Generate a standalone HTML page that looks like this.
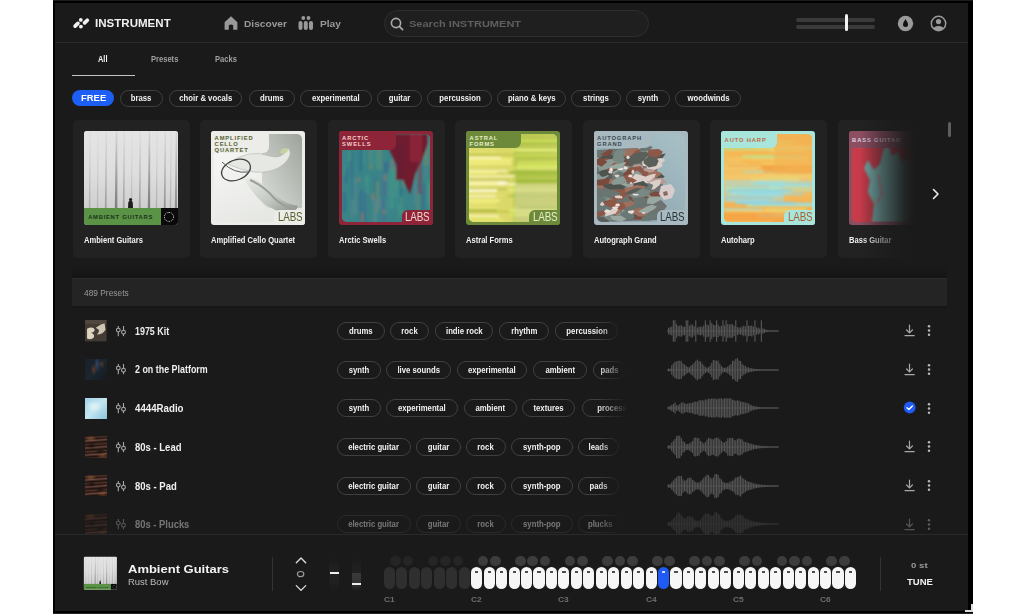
<!DOCTYPE html>
<html><head><meta charset="utf-8">
<style>
*{box-sizing:border-box;margin:0;padding:0}
html,body{width:1024px;height:614px;overflow:hidden;background:#fff}
body{position:relative;font-family:"Liberation Sans",sans-serif;color:#eee}
.a{position:absolute}
#frame{left:53px;top:0;width:920px;height:614px;background:#000;border-top:1px solid #1c1c1c;border-bottom:1px solid #262626}
#panel{left:55px;top:3px;width:913px;height:608px;background:#1a1a1a}
#hdrline{left:55px;top:42px;width:913px;height:1px;background:#2a2a2a}
.wide{font-weight:bold;white-space:nowrap}
.sx{transform-origin:0 50%;white-space:nowrap}
.t{position:absolute;white-space:nowrap;transform-origin:0 50%}
.pill{position:absolute;border:1px solid #404040;border-radius:9px;display:flex;align-items:center;justify-content:center;white-space:nowrap}
.pill span{display:inline-block;font-size:9px;font-weight:bold;color:#f2f2f2;transform:scaleX(.86)}
.card{position:absolute;top:120px;width:117px;height:138px;background:#222;border-radius:5px}
.art{position:absolute;left:11px;top:11px;width:94px;height:94px;border-radius:3px;overflow:hidden}
.lbl{font-size:5.8px;font-weight:bold;letter-spacing:.85px;white-space:nowrap}
.labs{font-size:12.3px;letter-spacing:-0.2px;font-weight:normal;line-height:12px;transform:scaleX(.8);transform-origin:0 0;white-space:nowrap}
.ctitle{position:absolute;left:11.3px;top:115px;font-size:8.9px;font-weight:bold;color:#f0f0f0;white-space:nowrap;transform:scaleX(.853);transform-origin:0 50%}
.key{position:absolute;top:566.8px;width:11.1px;height:22.4px;border-radius:5.6px}
.key i{position:absolute;left:4px;top:4.2px;width:3.2px;height:1.6px}
.bkey{position:absolute;top:555.6px;width:10.6px;height:10.6px;border-radius:50%}
</style></head><body>
<div id="frame" class="a"></div>
<div id="panel" class="a"></div>
<div id="hdrline" class="a"></div>
<!-- header -->
<svg class="a" style="left:68px;top:14px" width="26" height="18" viewBox="0 0 26 18">
  <line x1="7.1" y1="12.1" x2="9.9" y2="9.4" stroke="#f0f0f0" stroke-width="3.7" stroke-linecap="round"/>
  <line x1="16.6" y1="8.9" x2="19.3" y2="6.2" stroke="#f0f0f0" stroke-width="3.7" stroke-linecap="round"/>
  <circle cx="12.8" cy="5.9" r="1.9" fill="#f0f0f0"/>
  <circle cx="12.9" cy="12.6" r="1.9" fill="#f0f0f0"/>
</svg>
<div class="a wide sx" style="left:95px;top:17.3px;font-size:10.5px;transform:scaleX(1.1);color:#f0f0f0">INSTRUMENT</div>
<!-- home icon -->
<svg class="a" style="left:224px;top:16px" width="14" height="14" viewBox="0 0 14 14">
  <path d="M0.6 6.2 L7 0.3 L13.4 6.2 L13.4 13.8 L9.2 13.8 L9.2 9.3 Q7 7.6 4.8 9.3 L4.8 13.8 L0.6 13.8 Z" fill="#999"/>
</svg>
<div class="a wide sx" style="left:244px;top:18px;font-size:9.7px;transform:scaleX(1.05);color:#999">Discover</div>
<!-- play icon (people) -->
<svg class="a" style="left:298px;top:16px" width="16" height="14" viewBox="0 0 16 14">
  <circle cx="5.3" cy="2" r="1.9" fill="#999"/><circle cx="10.5" cy="2" r="1.9" fill="#999"/>
  <rect x="0.5" y="5" width="4" height="9" rx="2" fill="#999"/>
  <rect x="5.8" y="5" width="4" height="9" rx="2" fill="#999"/>
  <rect x="11" y="5" width="4" height="9" rx="2" fill="#999"/>
</svg>
<div class="a wide sx" style="left:320px;top:18px;font-size:9.7px;transform:scaleX(1.05);color:#999">Play</div>
<!-- search -->
<div class="a" style="left:384px;top:10px;width:265px;height:27px;border-radius:14px;background:#1f1f1f;border:1px solid #2e2e2e"></div>
<svg class="a" style="left:390px;top:17px" width="14" height="14" viewBox="0 0 14 14">
  <circle cx="6" cy="6" r="4.6" fill="none" stroke="#aaa" stroke-width="1.6"/>
  <line x1="9.4" y1="9.4" x2="12.6" y2="12.6" stroke="#aaa" stroke-width="1.7" stroke-linecap="round"/>
</svg>
<div class="a wide sx" style="left:409px;top:18.5px;font-size:9.2px;transform:scaleX(1.2);color:#5f5f5f">Search INSTRUMENT</div>
<!-- volume -->
<div class="a" style="left:796px;top:18px;width:79px;height:4px;border-radius:2px;background:#3a3a3a"></div>
<div class="a" style="left:796px;top:25px;width:79px;height:4px;border-radius:2px;background:#3a3a3a"></div>
<div class="a" style="left:845px;top:14px;width:3px;height:17px;border-radius:1.5px;background:#f4f4f4"></div>
<!-- drop icon -->
<svg class="a" style="left:897px;top:15px" width="17" height="17" viewBox="0 0 17 17">
  <circle cx="8.5" cy="8.5" r="7.7" fill="#9a9a9a"/>
  <path d="M8.5 4 C7.5 6 6 7.5 6 9.6 A2.5 2.5 0 0 0 11 9.6 C11 7.5 9.5 6 8.5 4 Z" fill="#111"/>
</svg>
<!-- profile icon -->
<svg class="a" style="left:930px;top:15px" width="17" height="17" viewBox="0 0 17 17">
  <defs><clipPath id="pc"><circle cx="8.5" cy="8.5" r="6.9"/></clipPath></defs>
  <circle cx="8.5" cy="8.5" r="7.2" fill="none" stroke="#9a9a9a" stroke-width="1.5"/>
  <circle cx="8.5" cy="6.6" r="2.6" fill="#9a9a9a"/>
  <ellipse cx="8.5" cy="15.5" rx="6" ry="4.6" fill="#9a9a9a" clip-path="url(#pc)"/>
</svg>
<!-- tabs -->
<div class="t" style="left:98.2px;top:54.2px;font-size:8.8px;font-weight:bold;color:#f2f2f2;transform:scaleX(0.84);">All</div>
<div class="a" style="left:72px;top:75px;width:62.5px;height:1.4px;background:#c4c4c4"></div>
<div class="t" style="left:150.6px;top:54.2px;font-size:8.8px;font-weight:bold;color:#a0a0a0;transform:scaleX(0.86);">Presets</div>
<div class="t" style="left:214.6px;top:54.2px;font-size:8.8px;font-weight:bold;color:#a0a0a0;transform:scaleX(0.86);">Packs</div>
<!-- tags -->
<div class="a" style="left:72.4px;top:89.8px;width:41.8px;height:16.6px;border-radius:8.3px;background:#1d5ef5"></div>
<div class="t" style="left:81px;top:93px;font-size:9px;font-weight:bold;color:#fff;transform:scaleX(1.05);">FREE</div>
<div class="pill" style="left:119.5px;top:89.6px;width:43.5px;height:17px;"><span>brass</span></div>
<div class="pill" style="left:168.7px;top:89.6px;width:73.8px;height:17px;"><span>choir &amp; vocals</span></div>
<div class="pill" style="left:248.7px;top:89.6px;width:46.5px;height:17px;"><span>drums</span></div>
<div class="pill" style="left:300.4px;top:89.6px;width:71.6px;height:17px;"><span>experimental</span></div>
<div class="pill" style="left:377.0px;top:89.6px;width:45.2px;height:17px;"><span>guitar</span></div>
<div class="pill" style="left:427.3px;top:89.6px;width:64.5px;height:17px;"><span>percussion</span></div>
<div class="pill" style="left:497.0px;top:89.6px;width:69.0px;height:17px;"><span>piano &amp; keys</span></div>
<div class="pill" style="left:571.0px;top:89.6px;width:50.0px;height:17px;"><span>strings</span></div>
<div class="pill" style="left:626.0px;top:89.6px;width:44.0px;height:17px;"><span>synth</span></div>
<div class="pill" style="left:675.0px;top:89.6px;width:66.0px;height:17px;"><span>woodwinds</span></div>
<!-- cards -->
<div class="card" style="left:72.5px"><div class="art" style="background:#d8d8d8"><svg class="a" style="left:0;top:0" width="94" height="77" viewBox="0 0 94 77">
<defs><linearGradient id="fogm" x1="0" y1="0" x2="0" y2="1"><stop offset="0" stop-color="#fff" stop-opacity=".3"/><stop offset=".5" stop-color="#fff" stop-opacity=".75"/><stop offset="1" stop-color="#fff" stop-opacity="1"/></linearGradient>
<linearGradient id="trg" gradientUnits="userSpaceOnUse" x1="0" y1="0" x2="0" y2="77"><stop offset="0" stop-color="#505050" stop-opacity=".15"/><stop offset=".45" stop-color="#505050" stop-opacity=".6"/><stop offset="1" stop-color="#484848" stop-opacity="1"/></linearGradient>
<linearGradient id="fogbg" x1="0" y1="0" x2="0" y2="1"><stop offset="0" stop-color="#e4e4e4"/><stop offset=".55" stop-color="#dedede"/><stop offset="1" stop-color="#cfcfcf"/></linearGradient>
<filter id="fb"><feGaussianBlur stdDeviation=".5"/></filter></defs>
<rect width="94" height="77" fill="url(#fogbg)"/>
<g filter="url(#fb)"><path d="M5.8 0 L6.6 0 L6.4 77 L4.8 77 Z" fill="url(#trg)" opacity="0.25"/><path d="M13.8 0 L14.5 0 L14.2 77 L12.8 77 Z" fill="url(#trg)" opacity="0.2"/><path d="M21.8 0 L22.9 0 L22.7 77 L20.8 77 Z" fill="url(#trg)" opacity="0.35"/><path d="M31.8 0 L33.3 0 L33.4 77 L30.8 77 Z" fill="url(#trg)" opacity="0.6"/><path d="M39.8 0 L40.8 0 L40.6 77 L38.8 77 Z" fill="url(#trg)" opacity="0.35"/><path d="M47.8 0 L48.5 0 L48.2 77 L46.8 77 Z" fill="url(#trg)" opacity="0.2"/><path d="M55.8 0 L56.8 0 L56.7 77 L54.8 77 Z" fill="url(#trg)" opacity="0.35"/><path d="M64.8 0 L66.2 0 L66.2 77 L63.8 77 Z" fill="url(#trg)" opacity="0.6"/><path d="M72.8 0 L73.5 0 L73.2 77 L71.8 77 Z" fill="url(#trg)" opacity="0.25"/><path d="M80.8 0 L81.8 0 L81.7 77 L79.8 77 Z" fill="url(#trg)" opacity="0.45"/><path d="M86.8 0 L87.5 0 L87.2 77 L85.8 77 Z" fill="url(#trg)" opacity="0.25"/><path d="M91.8 0 L93.1 0 L93.0 77 L90.8 77 Z" fill="url(#trg)" opacity="0.5"/></g>
<path d="M44 77 L44.3 71 Q46.5 68 48.7 71 L49 77 Z" fill="#1e1e1e"/><circle cx="46.6" cy="68.6" r="1.6" fill="#1e1e1e"/>
</svg>
<div class="a" style="left:0;top:77px;width:77px;height:17px;background:#5a9246"></div>
<div class="a lbl" style="left:4.7px;top:83px;color:#1a341b;font-size:5.8px;letter-spacing:.75px">AMBIENT GUITARS</div>
<div class="a" style="left:77px;top:77px;width:17px;height:17px;background:#0a0a0a"></div>
<div class="a" style="left:80.5px;top:80.5px;width:10px;height:10px;border-radius:50%;border:1.3px dotted #ddd"></div>
</div><div class="ctitle">Ambient Guitars</div></div>
<div class="card" style="left:200.0px"><div class="art" style="background:#ecece8">
<div class="a" style="left:3px;top:3px;width:88px;height:88px;border-radius:5px;overflow:hidden;background:linear-gradient(160deg,#f8f8f6 0%,#f0f1ee 45%,#e2e4e0 100%)"><svg class="a" style="left:0;top:0" width="88" height="88" viewBox="0 0 88 88"><defs><linearGradient id="cg2" x1="0" y1="1" x2="1" y2="0"><stop offset="0" stop-color="#dcdfda"/><stop offset="1" stop-color="#969c94"/></linearGradient>
<linearGradient id="cg3" x1="0" y1="0" x2="1" y2="1"><stop offset="0" stop-color="#f0f2ee"/><stop offset=".6" stop-color="#c4c8c2"/><stop offset="1" stop-color="#8a9088"/></linearGradient>
<filter id="cb"><feGaussianBlur stdDeviation=".5"/></filter></defs>
<rect x="48" y="-6" width="46" height="80" rx="8" fill="url(#cg2)"/>
<g filter="url(#cb)">
<path d="M14 30 Q34 14 56 22 Q68 26 74 14 Q80 20 70 30 Q58 40 40 38 Q26 36 14 30 Z" fill="#e6e8e4" stroke="#aeb2ac" stroke-width=".6"/>
<path d="M26 40 Q44 44 58 58 Q70 70 84 72 Q82 80 68 78 Q52 74 42 62 Q34 52 26 40 Z" fill="url(#cg3)"/>
<path d="M36 46 Q50 52 60 64 Q70 74 82 74" stroke="#9aa098" stroke-width="2" fill="none"/>
<ellipse cx="22" cy="36" rx="15" ry="10" fill="none" stroke="#3e423e" stroke-width="1.3" transform="rotate(-22 22 36)"/>
<ellipse cx="70" cy="17" rx="4" ry="2.5" fill="#c8d0a0" transform="rotate(-25 70 17)"/>
<path d="M8 28 Q20 40 34 38" stroke="#555a55" stroke-width="1" fill="none"/>
</g></svg></div>
<div class="a" style="left:0;top:0;width:58px;height:22px;background:#ecece8;border-bottom-right-radius:6px"></div>
<div class="a lbl" style="left:3.6px;top:3.6px;color:#55602e"><div style="height:6px;line-height:6px">AMPLIFIED</div><div style="height:6px;line-height:6px">CELLO</div><div style="height:6px;line-height:6px">QUARTET</div></div>
<div class="a" style="right:0;bottom:0;width:31px;height:15px;background:#ecece8;border-top-left-radius:6px"></div>
<div class="a labs" style="left:66.5px;top:80.3px;color:#55602e">LABS</div>
</div><div class="ctitle">Amplified Cello Quartet</div></div>
<div class="card" style="left:327.5px"><div class="art" style="background:#8e2438">
<div class="a" style="left:3px;top:3px;width:88px;height:88px;border-radius:5px;overflow:hidden;background:#3a8a94"><svg class="a" style="left:0;top:0" width="88" height="88" viewBox="0 0 88 88"><defs><filter id="ab"><feGaussianBlur stdDeviation="1"/></filter></defs>
<rect width="88" height="88" fill="#3a8488"/>
<g filter="url(#ab)"><rect x="39.8" y="64.7" width="3.5" height="22.9" fill="#4e6c94" opacity=".7"/><rect x="75.2" y="56.3" width="2.2" height="23.2" fill="#6a8a70" opacity=".7"/><rect x="69.8" y="21.2" width="1.8" height="10.9" fill="#3a8a8c" opacity=".7"/><rect x="52.4" y="31.7" width="2.9" height="31.6" fill="#42948a" opacity=".7"/><rect x="54.8" y="4.4" width="4.4" height="9.1" fill="#3c6690" opacity=".7"/><rect x="52.8" y="22.8" width="4.2" height="26.9" fill="#3c6690" opacity=".7"/><rect x="45.7" y="35.0" width="3.7" height="29.2" fill="#3e9086" opacity=".7"/><rect x="57.6" y="38.6" width="2.9" height="37.8" fill="#2e7288" opacity=".7"/><rect x="62.3" y="16.1" width="2.6" height="17.2" fill="#2e7288" opacity=".7"/><rect x="49.6" y="7.5" width="1.9" height="17.3" fill="#2e7288" opacity=".7"/><rect x="84.3" y="0.0" width="4.5" height="14.7" fill="#3a8a8c" opacity=".7"/><rect x="41.4" y="27.8" width="4.9" height="10.3" fill="#3c6690" opacity=".7"/><rect x="68.5" y="6.1" width="2.4" height="18.6" fill="#5a8890" opacity=".7"/><rect x="66.7" y="17.2" width="1.9" height="11.2" fill="#3a8a8c" opacity=".7"/><rect x="40.9" y="47.7" width="3.2" height="14.0" fill="#4e6c94" opacity=".7"/><rect x="16.8" y="9.2" width="4.1" height="28.6" fill="#2e7288" opacity=".7"/><rect x="34.7" y="0.0" width="5.0" height="35.7" fill="#6a8a70" opacity=".7"/><rect x="26.8" y="14.7" width="4.6" height="20.6" fill="#6a8a70" opacity=".7"/><rect x="56.5" y="69.3" width="1.9" height="14.8" fill="#4a9480" opacity=".7"/><rect x="0.8" y="58.1" width="3.6" height="20.4" fill="#2e7288" opacity=".7"/><rect x="7.9" y="17.0" width="3.5" height="27.2" fill="#36708a" opacity=".7"/><rect x="54.7" y="41.1" width="1.9" height="34.6" fill="#42948a" opacity=".7"/><rect x="76.3" y="10.8" width="2.1" height="37.1" fill="#6a8a70" opacity=".7"/><rect x="22.0" y="51.8" width="2.2" height="38.1" fill="#3c6690" opacity=".7"/><rect x="60.5" y="33.8" width="2.9" height="10.5" fill="#3a8a8c" opacity=".7"/><rect x="9.1" y="67.4" width="1.6" height="15.6" fill="#5a8890" opacity=".7"/><rect x="22.6" y="41.8" width="4.4" height="17.4" fill="#42948a" opacity=".7"/><rect x="81.8" y="8.8" width="4.9" height="23.3" fill="#6a8a70" opacity=".7"/><rect x="54.1" y="64.2" width="2.5" height="14.5" fill="#3a8a8c" opacity=".7"/><rect x="6.1" y="17.4" width="2.9" height="9.5" fill="#4a9480" opacity=".7"/><rect x="32.5" y="9.2" width="3.5" height="19.6" fill="#3e9086" opacity=".7"/><rect x="86.3" y="48.4" width="3.8" height="26.7" fill="#42948a" opacity=".7"/><rect x="51.9" y="33.2" width="4.7" height="19.4" fill="#4a9480" opacity=".7"/><rect x="84.7" y="44.5" width="1.6" height="23.4" fill="#4a9480" opacity=".7"/><rect x="28.1" y="5.3" width="5.0" height="25.5" fill="#3a8a8c" opacity=".7"/><rect x="79.2" y="49.3" width="4.1" height="33.4" fill="#36708a" opacity=".7"/><rect x="31.0" y="63.1" width="3.9" height="35.9" fill="#5a8890" opacity=".7"/><rect x="83.1" y="35.0" width="1.6" height="8.5" fill="#5a8890" opacity=".7"/><rect x="33.4" y="5.1" width="1.5" height="10.9" fill="#2e7288" opacity=".7"/><rect x="87.4" y="51.0" width="4.6" height="20.4" fill="#6a8a70" opacity=".7"/><rect x="40.3" y="37.9" width="3.1" height="24.6" fill="#4e6c94" opacity=".7"/><rect x="2.6" y="33.7" width="3.6" height="15.4" fill="#2e7288" opacity=".7"/><rect x="43.8" y="64.4" width="3.7" height="16.2" fill="#3a8a8c" opacity=".7"/><rect x="32.4" y="42.8" width="2.0" height="24.6" fill="#36708a" opacity=".7"/><rect x="58.1" y="62.4" width="3.0" height="18.5" fill="#4a9480" opacity=".7"/><rect x="17.5" y="56.4" width="3.0" height="37.3" fill="#3c6690" opacity=".7"/><rect x="33.8" y="22.2" width="3.5" height="12.4" fill="#3e9086" opacity=".7"/><rect x="30.9" y="2.8" width="4.6" height="10.1" fill="#4a9480" opacity=".7"/><rect x="72.3" y="33.0" width="1.9" height="37.6" fill="#5a8890" opacity=".7"/><rect x="33.7" y="47.1" width="3.3" height="30.9" fill="#6a8a70" opacity=".7"/><rect x="39.8" y="2.2" width="1.8" height="35.9" fill="#3a8a8c" opacity=".7"/><rect x="59.7" y="24.8" width="2.5" height="28.8" fill="#6a8a70" opacity=".7"/><rect x="1.7" y="31.8" width="2.0" height="8.8" fill="#4a9480" opacity=".7"/><rect x="20.9" y="3.3" width="2.0" height="28.1" fill="#3e9086" opacity=".7"/><rect x="9.6" y="44.8" width="3.4" height="19.8" fill="#2e7288" opacity=".7"/><rect x="60.2" y="33.3" width="2.2" height="13.7" fill="#3a8a8c" opacity=".7"/><rect x="66.4" y="2.5" width="3.4" height="15.2" fill="#36708a" opacity=".7"/><rect x="47.5" y="35.0" width="4.8" height="39.9" fill="#42948a" opacity=".7"/><rect x="34.6" y="63.4" width="4.3" height="10.8" fill="#5a8890" opacity=".7"/><rect x="11.4" y="43.8" width="3.1" height="37.1" fill="#5a8890" opacity=".7"/><rect x="29.8" y="59.2" width="2" height="7.0" fill="#b07a50" opacity=".6"/><rect x="41.9" y="40.6" width="2" height="6.0" fill="#b07a50" opacity=".6"/><rect x="49.2" y="25.9" width="2" height="9.2" fill="#b07a50" opacity=".6"/><rect x="40.9" y="75.5" width="2" height="4.7" fill="#b07a50" opacity=".6"/><rect x="15.9" y="43.4" width="2" height="4.5" fill="#b07a50" opacity=".6"/><rect x="18.9" y="78.6" width="2" height="9.6" fill="#b07a50" opacity=".6"/>
<path d="M44 0 L86 0 L86 10 L80 26 L74 38 L68 60 L62 48 L56 34 L50 22 L46 12 Z" fill="#701a2e"/>
<rect x="54" y="6" width="8" height="40" fill="#6a1a30"/>
<rect x="68" y="0" width="12" height="28" fill="#8a2438"/><rect x="76" y="30" width="4" height="30" fill="#8a3050" opacity=".5"/>
</g></svg></div>
<div class="a" style="left:0;top:0;width:57px;height:19px;background:#8e2438;border-bottom-right-radius:6px"></div>
<div class="a lbl" style="left:3.6px;top:3.6px;color:#f2d0ca"><div style="height:6px;line-height:6px">ARCTIC</div><div style="height:6px;line-height:6px">SWELLS</div></div>
<div class="a" style="right:0;bottom:0;width:31px;height:15px;background:#8e2438;border-top-left-radius:6px"></div>
<div class="a labs" style="left:66.5px;top:80.3px;color:#f4d4cc">LABS</div>
</div><div class="ctitle">Arctic Swells</div></div>
<div class="card" style="left:455.0px"><div class="art" style="background:#6c8a3a">
<div class="a" style="left:3px;top:3px;width:88px;height:88px;border-radius:5px;overflow:hidden;background:#dcdc74"><svg class="a" style="left:0;top:0" width="88" height="88" viewBox="0 0 88 88"><defs><filter id="sb"><feGaussianBlur stdDeviation="1"/></filter>
<linearGradient id="sg" x1="0" y1="0" x2="1" y2="0"><stop offset="0" stop-color="#e0dc70"/><stop offset=".48" stop-color="#dad868"/><stop offset=".54" stop-color="#b8c850"/><stop offset="1" stop-color="#c0cc58"/></linearGradient></defs>
<rect width="88" height="88" fill="url(#sg)"/>
<g filter="url(#sb)"><rect x="-2" y="23.0" width="33.7" height="2.6" fill="#fffae0" opacity=".85"/><rect x="-2" y="7.3" width="35.5" height="2.1" fill="#e8e870" opacity=".85"/><rect x="-2" y="24.2" width="45.2" height="3.0" fill="#f4f080" opacity=".85"/><rect x="-2" y="5.6" width="38.3" height="2.8" fill="#f4f080" opacity=".85"/><rect x="-2" y="60.4" width="28.7" height="3.0" fill="#fff6d0" opacity=".85"/><rect x="-2" y="45.5" width="42.2" height="2.6" fill="#b0b848" opacity=".85"/><rect x="-2" y="83.2" width="27.2" height="2.2" fill="#b0b848" opacity=".85"/><rect x="-2" y="19.5" width="45.8" height="2.3" fill="#c8c850" opacity=".85"/><rect x="-2" y="49.4" width="46.1" height="1.5" fill="#e8e870" opacity=".85"/><rect x="-2" y="49.3" width="48.9" height="1.8" fill="#fff6d0" opacity=".85"/><rect x="-2" y="76.6" width="46.3" height="2.4" fill="#c8c850" opacity=".85"/><rect x="-2" y="85.2" width="37.4" height="2.2" fill="#e8e870" opacity=".85"/><rect x="-2" y="36.2" width="40.1" height="1.4" fill="#fffae0" opacity=".85"/><rect x="-2" y="2.4" width="47.9" height="3.1" fill="#e8e870" opacity=".85"/><rect x="-2" y="47.9" width="37.3" height="3.2" fill="#fffae0" opacity=".85"/><rect x="-2" y="60.8" width="36.5" height="1.3" fill="#e8e870" opacity=".85"/><rect x="-2" y="81.0" width="31.7" height="2.8" fill="#fff6d0" opacity=".85"/><rect x="-2" y="41.6" width="47.5" height="1.5" fill="#fff6d0" opacity=".85"/><rect x="-2" y="82.3" width="32.9" height="3.0" fill="#e8e870" opacity=".85"/><rect x="-2" y="16.8" width="28.2" height="2.4" fill="#c8c850" opacity=".85"/><rect x="-2" y="68.6" width="28.9" height="1.2" fill="#f4f080" opacity=".85"/><rect x="-2" y="1.0" width="33.9" height="1.8" fill="#b0b848" opacity=".85"/><rect x="-2" y="54.5" width="39.6" height="1.4" fill="#b0b848" opacity=".85"/><rect x="-2" y="75.0" width="29.9" height="2.4" fill="#b0b848" opacity=".85"/><rect x="-2" y="46.7" width="40.8" height="2.1" fill="#fff6d0" opacity=".85"/><rect x="-2" y="72.6" width="30.1" height="2.4" fill="#e8e870" opacity=".85"/><rect x="-2" y="55.6" width="30.4" height="2.5" fill="#e8e870" opacity=".85"/><rect x="-2" y="47.8" width="30.8" height="2.4" fill="#f4f080" opacity=".85"/><rect x="-2" y="65.2" width="32.9" height="2.8" fill="#f4f080" opacity=".85"/><rect x="-2" y="27.7" width="44.5" height="3.0" fill="#f4f080" opacity=".85"/><rect x="-2" y="17.1" width="28.3" height="1.4" fill="#f4f080" opacity=".85"/><rect x="-2" y="7.8" width="45.8" height="2.0" fill="#fff6d0" opacity=".85"/><rect x="-2" y="37.1" width="30.0" height="2.8" fill="#f4f080" opacity=".85"/><rect x="-2" y="55.3" width="30.0" height="2.8" fill="#fffae0" opacity=".85"/><rect x="39.4" y="54.6" width="50" height="2.8" fill="#e8f080" opacity=".8"/><rect x="47.6" y="40.5" width="50" height="2.5" fill="#a8c040" opacity=".8"/><rect x="39.8" y="38.6" width="50" height="1.0" fill="#98b838" opacity=".8"/><rect x="49.9" y="14.8" width="50" height="1.4" fill="#a8c040" opacity=".8"/><rect x="39.6" y="74.2" width="50" height="1.2" fill="#d8e860" opacity=".8"/><rect x="41.9" y="54.5" width="50" height="1.2" fill="#d8e860" opacity=".8"/><rect x="40.5" y="37.4" width="50" height="2.0" fill="#98b838" opacity=".8"/><rect x="48.1" y="29.9" width="50" height="2.3" fill="#d8e860" opacity=".8"/><rect x="42.9" y="14.5" width="50" height="1.9" fill="#e8f080" opacity=".8"/><rect x="41.9" y="15.6" width="50" height="1.3" fill="#d8e860" opacity=".8"/><rect x="44.8" y="6.8" width="50" height="2.7" fill="#98b838" opacity=".8"/><rect x="47.7" y="15.3" width="50" height="2.2" fill="#e8f080" opacity=".8"/><rect x="47.8" y="20.7" width="50" height="2.8" fill="#a8c040" opacity=".8"/><rect x="47.2" y="32.5" width="50" height="2.8" fill="#e8f080" opacity=".8"/><rect x="38.8" y="61.2" width="50" height="1.8" fill="#a8c040" opacity=".8"/><rect x="48.7" y="27.3" width="50" height="1.9" fill="#d8e860" opacity=".8"/><rect x="40.8" y="79.2" width="50" height="2.8" fill="#d8e860" opacity=".8"/><rect x="40.6" y="75.6" width="50" height="2.3" fill="#e8f080" opacity=".8"/><rect x="42.7" y="32.5" width="50" height="1.4" fill="#d8e860" opacity=".8"/><rect x="47.1" y="80.0" width="50" height="2.3" fill="#d8e860" opacity=".8"/><rect x="46.9" y="78.4" width="50" height="1.0" fill="#d8e860" opacity=".8"/><rect x="47.1" y="20.5" width="50" height="1.8" fill="#d8e860" opacity=".8"/><rect x="41.0" y="51.8" width="50" height="1.0" fill="#e8f080" opacity=".8"/><rect x="49.6" y="72.5" width="50" height="2.1" fill="#98b838" opacity=".8"/><rect x="47.7" y="45.4" width="50" height="3.0" fill="#98b838" opacity=".8"/><rect x="42.6" y="6.1" width="50" height="2.2" fill="#d8e860" opacity=".8"/><rect x="46" y="50" width="42" height="38" fill="#dcd8b0" opacity=".45"/></g></svg></div>
<div class="a" style="left:0;top:0;width:55px;height:17px;background:#6c8a3a;border-bottom-right-radius:6px"></div>
<div class="a lbl" style="left:3.6px;top:3.6px;color:#e6eec8"><div style="height:6px;line-height:6px">ASTRAL</div><div style="height:6px;line-height:6px">FORMS</div></div>
<div class="a" style="right:0;bottom:0;width:31px;height:15px;background:#6c8a3a;border-top-left-radius:6px"></div>
<div class="a labs" style="left:66.5px;top:80.3px;color:#e6eec8">LABS</div>
</div><div class="ctitle">Astral Forms</div></div>
<div class="card" style="left:582.5px"><div class="art" style="background:#a8bac0">
<div class="a" style="left:3px;top:3px;width:88px;height:88px;border-radius:5px;overflow:hidden;background:#96aeb6"><svg class="a" style="left:0;top:0" width="88" height="88" viewBox="0 0 88 88"><defs><linearGradient id="ag" x1="1" y1="0" x2="0" y2="1"><stop offset="0" stop-color="#a8c0c6"/><stop offset="1" stop-color="#86a0aa"/></linearGradient>
<filter id="rb"><feGaussianBlur stdDeviation=".35"/></filter></defs>
<rect width="88" height="88" fill="url(#ag)"/>
<g filter="url(#rb)"><path d="M0 16 L40 14 L52 22 L62 30 L58 42 L66 50 L62 64 L70 72 L60 86 L0 88 Z" fill="#6e7270"/><polygon points="67.7,42.4 61.5,47.6 48.1,48.1 47.7,42.1 62.5,38.6" fill="#4e524e"/><polygon points="55.8,13.0 49.8,19.1 41.0,24.4 37.6,24.5 35.6,20.0 43.9,14.2 50.5,11.3" fill="#687470"/><polygon points="54.7,49.6 47.9,53.0 35.6,52.4 33.0,47.2 46.1,45.4" fill="#dccfca"/><polygon points="44.9,46.5 40.4,49.8 31.7,50.5 25.7,47.5 25.9,42.6 31.7,42.4 41.5,42.6" fill="#8e5848"/><polygon points="34.5,60.2 35.1,63.6 29.7,68.5 24.8,64.6 23.7,61.4 31.2,58.3" fill="#687470"/><polygon points="27.2,51.3 25.6,54.8 20.4,55.9 15.5,56.2 15.0,50.5 18.6,46.1 22.3,46.3" fill="#7a8884"/><polygon points="42.1,49.1 37.1,52.1 32.0,54.2 26.8,50.1 30.2,45.8 37.8,44.4" fill="#b49a92"/><polygon points="21.9,63.3 16.9,67.1 11.2,69.5 7.4,65.6 6.9,59.8 11.7,59.3 17.5,60.5" fill="#8a9a94"/><polygon points="51.2,57.3 47.1,60.7 38.2,63.4 31.8,59.0 31.9,57.2 37.9,54.6 48.4,55.4" fill="#8a9a94"/><polygon points="44.0,36.9 41.6,40.8 30.5,40.7 25.2,38.9 30.0,34.6 38.5,34.9" fill="#5a5e5a"/><polygon points="65.6,61.8 63.6,66.1 56.3,70.0 49.9,69.7 50.7,64.8 54.4,61.3 62.5,59.3" fill="#9aa8a2"/><polygon points="34.7,25.1 32.9,31.3 23.1,31.4 14.9,28.4 22.0,22.4 27.5,21.3" fill="#b49a92"/><polygon points="40.8,79.4 38.4,82.8 35.6,84.1 30.7,84.7 29.5,81.9 34.1,78.7 37.5,77.7" fill="#8e5848"/><polygon points="65.2,39.6 57.4,45.5 50.0,44.9 44.1,40.8 51.9,36.2 57.2,35.7" fill="#a0705e"/><polygon points="33.2,69.7 25.7,76.1 16.8,78.3 14.6,75.1 17.7,71.1 25.1,67.8" fill="#8e5848"/><polygon points="14.7,23.0 13.3,27.8 7.5,29.2 3.4,28.6 3.9,22.6 10.2,21.3" fill="#4e524e"/><polygon points="38.1,47.7 27.9,55.0 20.0,56.7 14.9,50.6 28.7,44.8" fill="#8a9a94"/><polygon points="18.0,42.9 14.1,50.7 4.9,54.4 -0.2,53.9 -2.4,48.0 6.1,43.0 11.7,43.4" fill="#a0705e"/><polygon points="17.2,42.6 15.0,44.8 10.2,46.1 6.6,44.9 6.6,43.0 9.2,39.6 13.0,40.3" fill="#5a5e5a"/><polygon points="70.6,48.8 60.1,50.8 51.7,48.8 50.2,45.1 64.9,43.8" fill="#b49a92"/><polygon points="54.5,60.9 53.1,63.7 42.0,68.3 40.1,66.3 42.7,62.1 50.8,59.8" fill="#8a9a94"/><polygon points="38.2,28.4 33.3,32.0 29.0,30.5 21.2,28.1 22.8,22.4 31.1,21.3 35.5,23.4" fill="#4e524e"/><polygon points="68.8,19.6 62.7,27.8 56.9,31.8 48.7,32.0 50.4,25.5 60.6,21.1" fill="#4e524e"/><polygon points="45.0,71.5 41.7,75.5 34.6,78.2 31.2,78.0 29.7,75.6 32.6,72.2 37.6,70.4" fill="#687470"/><polygon points="65.9,17.7 62.7,22.4 50.2,25.5 45.9,21.6 52.1,15.4 61.6,15.1" fill="#8e5848"/><polygon points="36.0,56.1 35.1,58.5 18.2,61.4 13.8,58.5 18.7,54.5 27.9,53.1" fill="#4e524e"/><polygon points="34.5,48.7 28.6,55.0 19.8,56.6 21.5,52.4 28.1,48.6" fill="#9aa8a2"/><polygon points="16.8,58.8 11.1,64.8 5.9,66.7 4.2,64.0 13.0,58.1" fill="#7a8884"/><polygon points="32.6,39.5 27.3,44.3 20.5,44.5 13.4,44.2 21.2,39.8 29.0,38.6" fill="#6a7874"/><polygon points="40.6,25.3 33.8,31.3 20.0,32.0 19.5,24.9 31.6,23.7" fill="#7a4c3e"/><polygon points="48.8,84.3 45.1,86.0 33.7,84.7 34.4,81.4 46.3,81.2" fill="#7a4c3e"/><polygon points="25.3,31.1 21.9,37.9 13.2,41.7 5.8,42.9 2.0,41.2 8.0,36.2 19.4,32.2" fill="#5a5e5a"/><polygon points="24.5,54.3 20.6,58.5 15.5,60.9 11.0,58.8 11.1,53.0 14.5,49.9 21.1,51.4" fill="#6a7874"/><polygon points="68.3,25.9 63.2,30.4 57.1,31.7 49.0,32.2 49.7,29.1 54.5,25.6 64.2,24.1" fill="#dccfca"/><polygon points="16.8,25.2 16.4,28.8 10.0,31.1 6.3,28.7 5.8,26.9 7.9,24.1 14.0,23.3" fill="#b49a92"/><polygon points="21.7,55.8 18.0,63.5 13.3,62.8 11.0,57.3 17.7,54.6" fill="#8e5848"/><polygon points="39.8,68.2 32.5,72.7 20.3,74.0 20.2,69.4 34.0,66.9" fill="#a0705e"/><polygon points="65.2,59.3 62.8,62.6 54.1,62.4 51.8,59.9 58.3,57.3" fill="#7a4c3e"/><polygon points="51.9,78.4 45.4,82.7 35.1,81.7 34.6,76.0 43.3,73.4" fill="#a0705e"/><polygon points="27.1,44.7 28.0,49.1 13.7,54.1 7.5,51.7 11.6,46.3 20.4,43.7" fill="#a0705e"/><polygon points="12.5,67.3 6.6,70.6 -5.3,69.8 -3.9,66.4 3.8,65.5" fill="#7a4c3e"/><polygon points="20.3,16.4 19.9,20.5 13.4,24.0 9.2,20.5 9.8,17.5 16.6,14.6" fill="#6a7874"/><polygon points="28.3,77.1 25.2,81.7 15.9,80.9 16.6,77.2 26.1,75.5" fill="#8a9a94"/><polygon points="52.1,62.9 46.4,67.4 36.7,68.1 31.1,63.9 34.1,60.3 46.1,60.3" fill="#7a4c3e"/><polygon points="46.4,33.6 42.9,36.8 38.5,36.6 35.1,33.4 37.3,30.8 43.1,30.1" fill="#b49a92"/><polygon points="34.2,37.7 31.1,40.8 25.5,42.9 21.9,40.6 23.6,37.7 32.0,35.9" fill="#8a9a94"/><polygon points="44.5,47.0 39.9,49.3 34.0,48.5 31.0,45.2 34.3,42.6 40.0,43.0" fill="#a0705e"/><polygon points="40.4,81.4 37.9,84.4 27.5,86.3 23.7,85.3 18.4,84.5 26.6,81.1 35.3,79.8" fill="#4e524e"/><polygon points="19.6,36.9 15.8,43.0 6.5,45.8 -0.8,41.4 4.8,35.4 15.8,33.9" fill="#5a5e5a"/><polygon points="25.1,75.3 24.9,78.3 15.0,82.2 11.4,79.6 14.3,74.7 20.5,71.3" fill="#6a7874"/><polygon points="60.0,72.4 57.5,75.0 49.5,79.6 46.1,79.6 41.1,77.5 49.7,72.5 55.1,70.8" fill="#9aa8a2"/><polygon points="47.0,41.8 44.0,47.5 29.8,50.4 28.4,43.4 40.8,39.0" fill="#6a7874"/><polygon points="12.9,45.2 11.7,49.7 4.5,51.6 -5.7,51.1 -5.2,47.1 2.9,42.5 8.6,43.3" fill="#7a4c3e"/><polygon points="60.0,32.4 56.6,37.9 49.2,38.8 45.8,35.1 52.2,32.4" fill="#b49a92"/><polygon points="17.4,70.5 16.4,74.3 6.1,76.7 -4.4,76.6 -0.3,72.3 7.1,68.8 11.9,69.2" fill="#6a7874"/><polygon points="16.7,22.4 15.0,25.2 9.1,28.0 5.4,28.6 5.1,24.6 7.8,21.2 14.1,20.5" fill="#4e524e"/><polygon points="64.3,45.6 62.6,51.0 57.3,55.3 48.2,56.4 48.5,53.6 53.0,47.9 59.0,46.0" fill="#dccfca"/><polygon points="15.9,16.6 13.9,20.7 7.9,22.5 3.8,20.5 12.7,14.9" fill="#7a4c3e"/><polygon points="8.1,29.5 3.9,33.2 -3.8,31.4 -4.2,28.8 0.1,23.5 5.4,25.8" fill="#dccfca"/><polygon points="9.1,64.9 6.6,70.9 -2.7,75.5 -5.9,74.8 -7.6,68.7 -3.9,64.1 4.5,63.0" fill="#6a7874"/><polygon points="40.7,16.4 40.9,20.3 32.0,22.9 24.0,22.2 21.9,19.5 25.3,16.1 41.2,13.8" fill="#a0705e"/><polygon points="20.3,30.0 13.6,34.5 -2.2,31.2 -0.8,25.7 11.2,24.3" fill="#8e5848"/><polygon points="19.2,35.1 15.9,37.3 4.7,40.3 1.3,39.3 8.6,34.4 15.6,32.1" fill="#4e524e"/><polygon points="65.6,30.0 64.8,32.8 57.9,35.8 50.0,34.6 49.8,32.6 55.2,29.4 60.1,28.1" fill="#dccfca"/><polygon points="46.8,36.6 41.7,39.3 28.8,37.8 31.0,34.0 43.5,32.0" fill="#8e5848"/><polygon points="51.6,38.1 49.1,43.0 41.9,47.4 37.2,45.8 38.5,41.3 45.3,36.8" fill="#8e5848"/><polygon points="25.3,75.3 22.8,79.3 17.0,81.7 9.6,80.7 10.5,77.6 15.3,74.9 21.9,72.9" fill="#a0705e"/><polygon points="59.0,39.8 57.5,43.2 52.3,47.4 46.7,47.4 45.0,44.7 47.5,43.0 54.8,40.2" fill="#dccfca"/><polygon points="36.3,39.7 31.2,42.4 24.2,43.4 17.2,36.8 25.9,34.2 33.6,35.9" fill="#7a4c3e"/><polygon points="56.3,51.1 54.1,56.5 48.8,58.1 45.0,56.2 44.3,54.2 45.9,49.0 52.5,49.3" fill="#6a7874"/><polygon points="33.7,53.8 34.5,57.0 23.8,61.2 17.0,61.1 14.6,57.2 24.1,51.4 27.9,51.7" fill="#7a8884"/><polygon points="19.1,81.3 12.1,85.3 7.7,85.3 -1.7,82.0 -2.9,78.3 5.9,76.8 15.4,78.7" fill="#8e5848"/><polygon points="36.7,78.8 37.6,83.9 27.2,86.7 19.5,83.7 26.2,77.6 33.5,75.7" fill="#6a7874"/><polygon points="33.2,32.7 29.0,37.5 21.4,42.2 15.5,42.2 16.2,37.6 28.2,32.1" fill="#8a9a94"/><polygon points="13.5,39.4 9.0,44.4 -5.1,45.6 -6.2,39.8 6.2,37.9" fill="#4e524e"/><polygon points="51.5,16.5 48.3,22.8 41.7,23.7 39.6,21.8 44.9,17.3" fill="#8a9a94"/><polygon points="20.3,33.6 16.8,36.4 13.6,36.6 8.2,35.7 8.3,32.3 11.3,31.1 17.8,32.1" fill="#8e5848"/><polygon points="29.4,61.6 24.4,66.0 13.1,64.6 8.2,59.7 15.9,55.4 25.6,56.0" fill="#8e5848"/><polygon points="49.6,64.7 48.1,70.6 38.4,70.3 34.6,64.8 45.9,62.8" fill="#687470"/><polygon points="51.6,51.8 43.3,56.0 36.5,56.0 36.4,48.5 46.4,47.0" fill="#4e524e"/><polygon points="35.9,56.2 32.4,60.8 22.7,63.2 20.8,60.2 23.9,54.7 31.3,53.9" fill="#8e5848"/><polygon points="49.1,52.3 43.4,58.8 29.4,60.0 27.7,54.9 39.5,51.0" fill="#a0705e"/><polygon points="17.1,80.9 13.6,88.0 3.4,90.8 -0.9,84.2 13.2,78.3" fill="#7a8884"/><polygon points="29.5,85.1 24.0,87.8 15.2,85.7 13.1,81.9 23.8,81.6" fill="#9aa8a2"/><polygon points="28.7,52.5 25.8,55.4 12.6,55.5 7.3,53.2 5.5,50.7 15.4,49.4 24.0,50.4" fill="#4e524e"/><polygon points="29.5,28.2 24.7,34.5 13.8,35.0 10.1,33.2 24.4,28.0" fill="#9aa8a2"/><polygon points="26.7,38.9 25.3,46.9 16.7,46.4 16.3,40.8 22.2,37.0" fill="#687470"/><polygon points="53.1,56.4 52.1,62.0 36.2,64.5 32.0,61.3 34.6,58.1 44.0,54.5" fill="#7a8884"/><polygon points="60.5,27.1 56.2,30.5 53.1,32.5 45.5,31.9 45.1,27.5 48.1,22.3 55.7,23.2" fill="#dccfca"/><polygon points="24.1,59.4 15.8,63.7 4.0,62.5 2.1,57.3 16.3,56.1" fill="#687470"/><polygon points="12.1,41.7 7.5,44.9 -3.4,46.2 -3.0,41.1 6.2,37.9" fill="#8a9a94"/><polygon points="45.1,54.0 40.6,57.3 33.9,60.2 27.2,60.1 31.5,56.9 38.8,54.1" fill="#5a5e5a"/><polygon points="45.6,20.6 43.7,24.4 40.8,26.2 35.1,23.7 36.1,19.6 37.9,16.9 41.7,15.2" fill="#8e5848"/><polygon points="19.5,26.4 10.3,35.1 2.3,37.1 -0.2,28.7 13.1,25.0" fill="#8a9a94"/><polygon points="28.0,25.1 26.2,28.4 21.6,29.9 15.4,25.9 16.9,20.8 23.2,20.5 25.6,21.4" fill="#7a8884"/><polygon points="28.7,72.2 24.4,75.9 15.7,74.6 7.8,70.4 5.9,67.9 19.5,67.7 26.8,69.2" fill="#8e5848"/><polygon points="10.4,27.7 4.6,32.7 -1.6,29.6 -2.3,25.6 3.9,23.6" fill="#7a4c3e"/><polygon points="45.3,40.3 41.5,45.3 32.4,47.2 31.6,41.7 40.4,36.6" fill="#8a9a94"/><polygon points="61.7,27.1 59.2,32.0 51.8,33.4 46.7,29.2 46.5,25.9 52.2,21.7 59.3,23.5" fill="#5a5e5a"/><polygon points="48.5,42.5 44.3,47.5 35.4,49.8 32.4,44.7 39.1,39.7" fill="#dccfca"/><polygon points="28.8,16.9 27.1,21.7 24.2,23.8 17.5,22.8 17.4,18.0 21.6,15.6 27.1,15.6" fill="#7a8884"/><polygon points="20.4,65.6 17.3,70.3 12.9,72.4 7.8,70.9 11.0,65.8 16.9,65.0" fill="#8e5848"/><polygon points="52.4,20.3 46.0,27.0 41.9,29.1 31.7,30.9 28.9,24.3 38.3,19.0 48.4,17.6" fill="#5a5e5a"/><polygon points="37.2,41.8 33.1,45.1 24.0,46.4 24.9,43.0 30.4,40.4" fill="#8e5848"/><polygon points="11.8,40.0 9.8,41.4 5.4,43.0 2.5,40.7 2.5,38.0 6.1,36.8 10.1,37.3" fill="#4e524e"/><polygon points="28.5,45.2 26.5,49.7 19.8,50.6 15.8,51.0 14.1,48.2 20.2,43.3 26.5,42.2" fill="#8a9a94"/><polygon points="39.9,46.4 35.4,49.5 29.7,48.1 29.7,44.7 35.3,43.9" fill="#8e5848"/><polygon points="12.5,87.0 7.3,89.8 -9.2,86.8 -6.6,83.3 6.0,82.8" fill="#5a5e5a"/><polygon points="21.4,75.2 18.6,79.6 8.2,82.5 8.1,79.7 17.0,73.5" fill="#dccfca"/><polygon points="60.9,79.5 60.5,83.0 53.1,86.8 44.6,86.8 44.0,84.5 49.3,80.4 57.3,78.2" fill="#6a7874"/><polygon points="23.0,71.2 21.7,72.5 18.4,72.3 18.4,71.3 18.8,69.8 22.0,69.4" fill="#f0e6e2"/><polygon points="30.8,34.1 29.7,35.3 27.8,35.5 27.1,34.7 26.4,33.3 27.7,32.1 30.0,32.9" fill="#ece0dc"/><polygon points="32.8,24.0 32.1,24.6 30.6,25.0 29.2,24.0 29.5,23.1 30.8,21.6 32.3,22.2" fill="#ece0dc"/><polygon points="7.5,70.6 5.8,72.0 2.8,70.9 3.9,68.7 5.3,67.8" fill="#e0d0cc"/><polygon points="35.3,48.7 34.4,50.4 32.9,49.5 32.9,48.4 34.5,48.1" fill="#e0d0cc"/><polygon points="25.5,63.2 24.3,64.8 23.3,64.3 22.9,63.0 24.9,62.1" fill="#f0e6e2"/><polygon points="22.9,42.1 20.7,43.3 18.9,43.4 17.3,41.6 18.4,40.7 21.2,40.6" fill="#e0d0cc"/><polygon points="25.2,63.2 21.9,64.4 18.4,64.1 17.7,61.7 22.8,61.2" fill="#e0d0cc"/><polygon points="27.0,34.8 25.5,35.9 23.7,35.9 20.6,35.7 20.7,34.6 22.5,34.4 24.9,34.1" fill="#f0e6e2"/><polygon points="16.1,38.0 14.3,39.7 11.6,39.1 11.3,37.2 13.6,36.3" fill="#e0d0cc"/><polygon points="37.4,37.7 36.7,39.8 35.5,39.8 34.5,38.4 34.6,37.0 35.6,35.8 37.0,36.1" fill="#e0d0cc"/><polygon points="48.6,78.6 47.3,79.7 45.9,79.9 44.6,78.7 45.8,78.0 47.4,78.1" fill="#e0d0cc"/><polygon points="37.4,77.6 35.2,80.0 31.5,79.1 30.9,77.1 35.9,76.3" fill="#ece0dc"/><polygon points="13.8,77.3 12.0,78.9 8.3,78.8 7.0,77.5 9.1,75.3 11.1,75.5" fill="#ece0dc"/><polygon points="36.1,41.9 34.4,43.5 31.2,43.0 31.7,40.8 33.6,40.4" fill="#ece0dc"/><polygon points="21.4,73.2 19.9,75.0 17.6,75.3 14.6,73.8 16.6,72.4 19.9,72.5" fill="#ece0dc"/><polygon points="42.2,60.5 40.7,61.4 37.2,61.5 35.4,60.4 35.8,59.7 39.9,60.0" fill="#f0e6e2"/><polygon points="16.1,36.3 14.5,37.5 12.3,36.6 12.2,34.9 14.6,33.6" fill="#f0e6e2"/>
<polygon points="64,52 74,50 78,56 75,64 67,66 62,60" fill="#d8cccc"/><polygon points="66,58 70,57 71,61 67,62" fill="#8a6a60"/>
</g></svg></div>
<div class="a" style="left:0;top:0;width:57px;height:17px;background:#a8bac0;border-bottom-right-radius:6px"></div>
<div class="a lbl" style="left:3.6px;top:3.6px;color:#3a4850"><div style="height:6px;line-height:6px">AUTOGRAPH</div><div style="height:6px;line-height:6px">GRAND</div></div>
<div class="a" style="right:0;bottom:0;width:31px;height:15px;background:#a8bac0;border-top-left-radius:6px"></div>
<div class="a labs" style="left:66.5px;top:80.3px;color:#26343a">LABS</div>
</div><div class="ctitle">Autograph Grand</div></div>
<div class="card" style="left:710.0px"><div class="art" style="background:#a8e6dc">
<div class="a" style="left:3px;top:3px;width:88px;height:88px;border-radius:5px;overflow:hidden;background:#f4b454"><svg class="a" style="left:0;top:0" width="88" height="88" viewBox="0 0 88 88"><defs><filter id="hb"><feGaussianBlur stdDeviation=".8"/></filter>
<linearGradient id="hg" x1="0" y1="0" x2="0" y2="1"><stop offset="0" stop-color="#f4b454"/><stop offset=".5" stop-color="#f2c468"/><stop offset="1" stop-color="#f6a848"/></linearGradient></defs>
<rect width="88" height="88" fill="url(#hg)"/>
<g filter="url(#hb)"><rect x="0" y="46" width="60" height="22" fill="#9cdce4" opacity=".55"/><rect x="12.3" y="4.3" width="43.2" height="1.1" fill="#b0e090" opacity=".8"/><rect x="0.8" y="13.1" width="50.0" height="2.5" fill="#b0e090" opacity=".8"/><rect x="27.6" y="44.0" width="47.9" height="2.9" fill="#e8d878" opacity=".8"/><rect x="41.9" y="42.6" width="31.3" height="1.1" fill="#e8d878" opacity=".8"/><rect x="27.2" y="16.7" width="59.8" height="2.2" fill="#f6b850" opacity=".8"/><rect x="11.0" y="67.0" width="32.7" height="2.8" fill="#90d8e8" opacity=".8"/><rect x="4.5" y="24.4" width="55.9" height="2.5" fill="#f8c860" opacity=".8"/><rect x="40.8" y="12.8" width="54.1" height="2.8" fill="#c8e080" opacity=".8"/><rect x="3.8" y="80.6" width="37.2" height="1.1" fill="#f8c860" opacity=".8"/><rect x="28.4" y="39.6" width="36.7" height="2.1" fill="#f8c860" opacity=".8"/><rect x="14.6" y="14.8" width="45.1" height="2.3" fill="#f6b850" opacity=".8"/><rect x="18.5" y="65.7" width="31.6" height="1.2" fill="#90d8e8" opacity=".8"/><rect x="46.1" y="54.1" width="46.9" height="1.5" fill="#b8e8b0" opacity=".8"/><rect x="22.5" y="69.4" width="67.6" height="3.1" fill="#b8e8b0" opacity=".8"/><rect x="45.5" y="11.6" width="34.3" height="2.0" fill="#f0d070" opacity=".8"/><rect x="7.6" y="57.5" width="60.0" height="1.7" fill="#b8e8b0" opacity=".8"/><rect x="27.7" y="69.0" width="64.6" height="2.7" fill="#a0e0e0" opacity=".8"/><rect x="48.8" y="30.1" width="59.6" height="1.6" fill="#e8d878" opacity=".8"/><rect x="30.6" y="76.2" width="53.1" height="1.9" fill="#e8d878" opacity=".8"/><rect x="49.9" y="77.5" width="63.6" height="3.2" fill="#f0d070" opacity=".8"/><rect x="5.6" y="57.7" width="49.9" height="3.4" fill="#a0e0e0" opacity=".8"/><rect x="16.1" y="7.9" width="53.2" height="2.9" fill="#f8c860" opacity=".8"/><rect x="1.5" y="18.3" width="47.9" height="3.4" fill="#f6b850" opacity=".8"/><rect x="1.2" y="75.4" width="50.2" height="3.5" fill="#f0d070" opacity=".8"/><rect x="1.9" y="53.3" width="52.3" height="2.4" fill="#b8e8b0" opacity=".8"/><rect x="31.3" y="29.9" width="55.1" height="1.0" fill="#f8c860" opacity=".8"/><rect x="28.3" y="56.4" width="32.6" height="2.2" fill="#98dce8" opacity=".8"/><rect x="0.7" y="63.0" width="48.5" height="1.6" fill="#88d0e8" opacity=".8"/><rect x="9.1" y="41.7" width="45.9" height="2.7" fill="#f0d070" opacity=".8"/><rect x="22.3" y="27.5" width="54.7" height="2.9" fill="#f6b850" opacity=".8"/><rect x="-2.5" y="80.5" width="54.0" height="2.6" fill="#f4a444" opacity=".8"/><rect x="22.7" y="60.3" width="37.8" height="2.1" fill="#a0e0e0" opacity=".8"/><rect x="12.2" y="59.3" width="67.3" height="1.9" fill="#90d8e8" opacity=".8"/><rect x="31.0" y="12.2" width="51.9" height="2.7" fill="#f0d070" opacity=".8"/><rect x="-6.6" y="75.3" width="55.9" height="1.9" fill="#f8c860" opacity=".8"/><rect x="-0.3" y="41.9" width="32.6" height="1.3" fill="#e8d878" opacity=".8"/><rect x="32.0" y="46.8" width="64.4" height="1.3" fill="#98dce8" opacity=".8"/><rect x="33.7" y="80.8" width="65.4" height="1.9" fill="#a8dcc8" opacity=".8"/><rect x="30.6" y="48.8" width="69.0" height="2.5" fill="#90d8e8" opacity=".8"/><rect x="18.1" y="25.3" width="30.4" height="2.9" fill="#f6b850" opacity=".8"/><rect x="44.6" y="41.9" width="36.3" height="1.7" fill="#e8d878" opacity=".8"/><rect x="26.4" y="23.4" width="57.3" height="2.3" fill="#f0d070" opacity=".8"/><rect x="-5.6" y="87.2" width="54.3" height="3.0" fill="#f0d070" opacity=".8"/><rect x="19.0" y="37.0" width="45.9" height="1.7" fill="#a8dcc8" opacity=".8"/><rect x="-7.2" y="42.2" width="46.0" height="1.9" fill="#f8c860" opacity=".8"/><rect x="16.6" y="7.0" width="52.8" height="2.7" fill="#c8e080" opacity=".8"/><rect x="16.7" y="8.6" width="41.8" height="1.6" fill="#c8e080" opacity=".8"/><rect x="33.7" y="32.4" width="30.1" height="3.2" fill="#f4a444" opacity=".8"/><rect x="-1.8" y="14.9" width="65.6" height="1.4" fill="#c8e080" opacity=".8"/><rect x="2.8" y="65.9" width="47.8" height="1.2" fill="#a0e0e0" opacity=".8"/><rect x="10.1" y="53.2" width="35.8" height="1.1" fill="#90d8e8" opacity=".8"/><rect x="48.5" y="68.7" width="43.3" height="1.3" fill="#90d8e8" opacity=".8"/><rect x="39.7" y="35.3" width="66.4" height="3.3" fill="#f4a444" opacity=".8"/><rect x="45.0" y="15.7" width="38.3" height="2.2" fill="#f0d070" opacity=".8"/><rect x="46.9" y="56.6" width="54.7" height="1.2" fill="#a0e0e0" opacity=".8"/><rect x="39.0" y="28.2" width="39.5" height="2.8" fill="#f8c860" opacity=".8"/><rect x="41.9" y="74.3" width="40.0" height="2.3" fill="#e8d878" opacity=".8"/><rect x="25.7" y="48.6" width="40.5" height="1.8" fill="#a0e0e0" opacity=".8"/><rect x="17.8" y="21.3" width="34.7" height="2.7" fill="#c8e080" opacity=".8"/><rect x="19.8" y="8.4" width="55.8" height="1.4" fill="#f6b850" opacity=".8"/><rect x="3.5" y="32.1" width="54.3" height="1.9" fill="#f4a444" opacity=".8"/><rect x="25.9" y="21.8" width="54.5" height="1.2" fill="#b0e090" opacity=".8"/><rect x="14.4" y="67.8" width="55.9" height="2.5" fill="#88d0e8" opacity=".8"/><rect x="-2.6" y="32.9" width="40.0" height="2.0" fill="#f0d070" opacity=".8"/><rect x="38.0" y="41.0" width="57.0" height="2.4" fill="#f0d070" opacity=".8"/><rect x="-7.3" y="74.2" width="45.4" height="2.0" fill="#a8dcc8" opacity=".8"/><rect x="45.3" y="50.1" width="42.1" height="3.4" fill="#a0e0e0" opacity=".8"/><rect x="48.8" y="33.3" width="51.2" height="1.3" fill="#f4a444" opacity=".8"/><rect x="3.6" y="55.4" width="65.1" height="2.3" fill="#88d0e8" opacity=".8"/><rect x="38.0" y="31.0" width="67.3" height="2.2" fill="#f4a444" opacity=".8"/><rect x="50" y="0" width="38" height="40" fill="#f4b050" opacity=".5"/><rect x="0" y="78" width="88" height="10" fill="#f6a444" opacity=".6"/></g></svg></div>
<div class="a" style="left:0;top:0;width:56px;height:17px;background:#a8e6dc;border-bottom-right-radius:6px"></div>
<div class="a lbl" style="left:3.6px;top:5.6px;color:#c06a44"><div style="height:6px;line-height:6px">AUTO HARP</div></div>
<div class="a" style="right:0;bottom:0;width:31px;height:15px;background:#a8e6dc;border-top-left-radius:6px"></div>
<div class="a labs" style="left:66.5px;top:80.3px;color:#a85e34">LABS</div>
</div><div class="ctitle">Autoharp</div></div>
<div class="card" style="left:837.5px"><div class="art" style="background:#8e4e62">
<div class="a" style="left:3px;top:3px;width:88px;height:88px;border-radius:5px;overflow:hidden;background:#c04050"><svg class="a" style="left:0;top:0" width="88" height="88" viewBox="0 0 88 88"><defs><filter id="bb"><feGaussianBlur stdDeviation="1"/></filter>
<linearGradient id="bg" x1="0" y1="0" x2="1" y2="0"><stop offset="0" stop-color="#c83c4a"/><stop offset=".5" stop-color="#b83646"/><stop offset="1" stop-color="#c45464"/></linearGradient></defs>
<rect width="88" height="88" fill="url(#bg)"/>
<g filter="url(#bb)"><path d="M12 34 L16 26 L22 36 L28 30 L32 14 L36 10 L40 22 L46 18 L50 28 L56 24 L60 40 L58 56 L62 72 L56 88 L20 88 L22 70 L16 58 L18 46 Z" fill="#70a6a4"/>
<path d="M26 40 L30 60 L24 70" stroke="#c05060" stroke-width="2" fill="none" opacity=".6"/>
<rect x="4" y="10" width="10" height="3" fill="#e8c8d0" opacity=".5"/><rect x="62" y="70" width="14" height="3" fill="#e8d0d8" opacity=".4"/></g></svg></div>
<div class="a" style="left:0;top:0;width:70px;height:17px;background:#8e4e62;border-bottom-right-radius:6px"></div>
<div class="a lbl" style="left:3.6px;top:5.6px;color:#dcd6e2"><div style="height:6px;line-height:6px">BASS GUITAR</div></div>
<div class="a" style="right:0;bottom:0;width:31px;height:15px;background:#8e4e62;border-top-left-radius:6px"></div>
<div class="a labs" style="left:66.5px;top:80.3px;color:#dcd6e2">LABS</div>
</div><div class="ctitle">Bass Guitar</div></div>
<div class="a" style="left:860px;top:115px;width:108px;height:150px;background:linear-gradient(90deg,rgba(26,26,26,0) 0,rgba(26,26,26,.5) 22px,rgba(26,26,26,.92) 45px,#1a1a1a 55px)"></div>
<div class="a" style="left:948px;top:122px;width:3.2px;height:14.5px;border-radius:1.6px;background:#5e5e5e"></div>
<svg class="a" style="left:931px;top:188px" width="10" height="12" viewBox="0 0 10 12"><polyline points="2.5,1.5 7,6 2.5,10.5" fill="none" stroke="#eee" stroke-width="1.6" stroke-linecap="round" stroke-linejoin="round"/></svg>
<!-- list -->
<div class="a" style="left:72px;top:266px;width:875px;height:12px;background:linear-gradient(180deg,rgba(20,20,20,0),rgba(20,20,20,.9))"></div>
<div class="a" style="left:72px;top:305.5px;width:875px;height:2px;background:#171717"></div>
<div class="a" style="left:72px;top:278px;width:875px;height:27.5px;background:#242424;border-top:1px solid #2d2d2d"></div>
<div class="t" style="left:83.5px;top:288px;font-size:9px;color:#9a9a9a;transform:scaleX(.93)">489 Presets</div>
<div class="a" style="left:0;top:320.2px;width:1024px;height:24px;">
<svg class="a" style="left:85.2px;top:0" width="21.6" height="21.4" viewBox="0 0 22 22"><defs><filter id="kb"><feGaussianBlur stdDeviation=".6"/></filter></defs><rect width="22" height="22" fill="#443c34"/><g filter="url(#kb)"><path d="M2 9 Q8 6 10 10 Q9 13 6 13 Q10 14 9 18 Q6 21 2 19 Z" fill="#ddd4c0"/><path d="M11 8 Q16 4 20 3 L21 10 Q18 15 12 15 Q15 12 14 10 Z" fill="#cfc6b2"/><rect x="0" y="0" width="22" height="4" fill="#5a5046" opacity=".6"/></g></svg>
<svg class="a" style="left:114px;top:4.5px" width="14" height="13" viewBox="0 0 14 13"><g stroke="#a8a8a8" stroke-width="1.1" fill="none"><line x1="4.3" y1="1" x2="4.3" y2="11.2"/><line x1="9.5" y1="1" x2="9.5" y2="11.2"/></g><circle cx="4.3" cy="5.1" r="1.9" fill="#1a1a1a" stroke="#a8a8a8" stroke-width="1.1"/><circle cx="9.5" cy="7.2" r="1.9" fill="#1a1a1a" stroke="#a8a8a8" stroke-width="1.1"/></svg>
<div class="t" style="left:134.7px;top:5.6px;font-size:10px;font-weight:bold;color:#efefef;transform:scaleX(0.89)">1975 Kit</div>
<div class="a" style="left:330px;top:0;width:300px;height:22px;-webkit-mask-image:linear-gradient(90deg,#000 266px,rgba(0,0,0,.5) 282px,rgba(0,0,0,0) 297px)"><div class="pill" style="left:7.0px;top:1.7px;width:47.7px;height:18px;border-radius:9px"><span>drums</span></div><div class="pill" style="left:60.0px;top:1.7px;width:39.4px;height:18px;border-radius:9px"><span>rock</span></div><div class="pill" style="left:105.3px;top:1.7px;width:58.1px;height:18px;border-radius:9px"><span>indie rock</span></div><div class="pill" style="left:169.0px;top:1.7px;width:49.8px;height:18px;border-radius:9px"><span>rhythm</span></div><div class="pill" style="left:225.0px;top:1.7px;width:63.1px;height:18px;border-radius:9px"><span>percussion</span></div></div>
<div class="a" style="left:666.5px;top:-1.3px"><svg width="112" height="24" viewBox="0 0 112 24"><g fill="#565656"><rect x="1.0" y="8.74" width="1.15" height="6.52"/><rect x="2.6" y="8.20" width="1.15" height="7.60"/><rect x="4.2" y="7.50" width="1.15" height="9.00"/><rect x="5.8" y="1.30" width="1.15" height="21.40"/><rect x="7.4" y="1.30" width="1.15" height="21.40"/><rect x="9.0" y="5.13" width="1.15" height="13.74"/><rect x="10.6" y="7.09" width="1.15" height="9.83"/><rect x="12.2" y="6.47" width="1.15" height="11.06"/><rect x="13.8" y="6.23" width="1.15" height="11.54"/><rect x="15.4" y="7.55" width="1.15" height="8.91"/><rect x="17.0" y="7.85" width="1.15" height="8.30"/><rect x="18.6" y="1.30" width="1.15" height="21.40"/><rect x="20.2" y="1.30" width="1.15" height="21.40"/><rect x="21.8" y="6.84" width="1.15" height="10.32"/><rect x="23.4" y="5.61" width="1.15" height="12.78"/><rect x="25.0" y="5.63" width="1.15" height="12.74"/><rect x="26.6" y="7.52" width="1.15" height="8.96"/><rect x="28.2" y="1.30" width="1.15" height="21.40"/><rect x="29.8" y="8.61" width="1.15" height="6.79"/><rect x="31.4" y="7.79" width="1.15" height="8.42"/><rect x="33.0" y="7.56" width="1.15" height="8.87"/><rect x="34.6" y="8.07" width="1.15" height="7.87"/><rect x="36.2" y="6.36" width="1.15" height="11.27"/><rect x="37.8" y="1.30" width="1.15" height="21.40"/><rect x="39.4" y="5.54" width="1.15" height="12.91"/><rect x="41.0" y="6.31" width="1.15" height="11.37"/><rect x="42.6" y="1.30" width="1.15" height="21.40"/><rect x="44.2" y="4.04" width="1.15" height="15.93"/><rect x="45.8" y="5.90" width="1.15" height="12.19"/><rect x="47.4" y="6.18" width="1.15" height="11.64"/><rect x="49.0" y="1.30" width="1.15" height="21.40"/><rect x="50.6" y="5.73" width="1.15" height="12.54"/><rect x="52.2" y="7.47" width="1.15" height="9.06"/><rect x="53.8" y="6.80" width="1.15" height="10.40"/><rect x="55.4" y="1.30" width="1.15" height="21.40"/><rect x="57.0" y="6.35" width="1.15" height="11.31"/><rect x="58.6" y="1.30" width="1.15" height="21.40"/><rect x="60.2" y="5.10" width="1.15" height="13.79"/><rect x="61.8" y="5.56" width="1.15" height="12.89"/><rect x="63.4" y="5.00" width="1.15" height="14.00"/><rect x="65.0" y="5.41" width="1.15" height="13.18"/><rect x="66.6" y="7.02" width="1.15" height="9.97"/><rect x="68.2" y="1.30" width="1.15" height="21.40"/><rect x="69.8" y="8.04" width="1.15" height="7.93"/><rect x="71.4" y="8.44" width="1.15" height="7.12"/><rect x="73.0" y="8.55" width="1.15" height="6.90"/><rect x="74.6" y="7.72" width="1.15" height="8.55"/><rect x="76.2" y="6.70" width="1.15" height="10.60"/><rect x="77.8" y="7.55" width="1.15" height="8.89"/><rect x="79.4" y="1.30" width="1.15" height="21.40"/><rect x="81.0" y="6.70" width="1.15" height="10.59"/><rect x="82.6" y="6.99" width="1.15" height="10.02"/><rect x="84.2" y="6.41" width="1.15" height="11.18"/><rect x="85.8" y="7.54" width="1.15" height="8.93"/><rect x="87.4" y="1.30" width="1.15" height="21.40"/><rect x="89.0" y="8.43" width="1.15" height="7.14"/><rect x="90.6" y="8.47" width="1.15" height="7.06"/><rect x="92.2" y="9.45" width="1.15" height="5.09"/><rect x="93.8" y="1.30" width="1.15" height="21.40"/><rect x="95.4" y="9.22" width="1.15" height="5.57"/><rect x="97.0" y="10.16" width="1.15" height="3.68"/><rect x="98.6" y="10.77" width="1.15" height="2.45"/><rect x="100.2" y="11.18" width="1.15" height="1.64"/><rect x="101.8" y="11.40" width="1.15" height="1.20"/><rect x="103.4" y="11.40" width="1.15" height="1.20"/><rect x="105.0" y="11.40" width="1.15" height="1.20"/><rect x="106.6" y="11.40" width="1.15" height="1.20"/><rect x="108.2" y="11.40" width="1.15" height="1.20"/><rect x="109.8" y="11.40" width="1.15" height="1.20"/><rect x="0" y="11.55" width="112" height=".9"/></g></svg></div>
<svg class="a" style="left:903px;top:4px" width="13" height="13" viewBox="0 0 13 13"><g stroke="#a8a8a8" stroke-width="1.2" fill="none" stroke-linecap="round"><line x1="6.5" y1="1" x2="6.5" y2="8.6"/><polyline points="3.6,6 6.5,8.9 9.4,6" stroke-linejoin="round"/><line x1="2" y1="11.6" x2="11.2" y2="11.6"/></g></svg>
<svg class="a" style="left:926px;top:4px" width="6" height="14" viewBox="0 0 6 14"><g fill="#b8b8b8"><circle cx="3" cy="2.3" r="1.25"/><circle cx="3" cy="6.5" r="1.25"/><circle cx="3" cy="10.8" r="1.25"/></g></svg>
</div>
<div class="a" style="left:0;top:358.9px;width:1024px;height:24px;">
<div class="a" style="left:85.2px;top:0;width:21.6px;height:21.4px;background:radial-gradient(ellipse 3px 6px at 40% 50%,rgba(110,60,40,.8),rgba(0,0,0,0)),radial-gradient(ellipse 3px 8px at 55% 25%,rgba(50,80,120,.8),rgba(0,0,0,0)),radial-gradient(ellipse 3px 4px at 75% 25%,rgba(110,60,30,.7),rgba(0,0,0,0)),linear-gradient(135deg,#182028,#1c2630 50%,#141a20)"></div>
<svg class="a" style="left:114px;top:4.5px" width="14" height="13" viewBox="0 0 14 13"><g stroke="#a8a8a8" stroke-width="1.1" fill="none"><line x1="4.3" y1="1" x2="4.3" y2="11.2"/><line x1="9.5" y1="1" x2="9.5" y2="11.2"/></g><circle cx="4.3" cy="5.1" r="1.9" fill="#1a1a1a" stroke="#a8a8a8" stroke-width="1.1"/><circle cx="9.5" cy="7.2" r="1.9" fill="#1a1a1a" stroke="#a8a8a8" stroke-width="1.1"/></svg>
<div class="t" style="left:134.7px;top:5.6px;font-size:10px;font-weight:bold;color:#efefef;transform:scaleX(0.89)">2 on the Platform</div>
<div class="a" style="left:330px;top:0;width:300px;height:22px;-webkit-mask-image:linear-gradient(90deg,#000 266px,rgba(0,0,0,.5) 282px,rgba(0,0,0,0) 297px)"><div class="pill" style="left:6.9px;top:1.7px;width:43.7px;height:18px;border-radius:9px"><span>synth</span></div><div class="pill" style="left:56.3px;top:1.7px;width:64.7px;height:18px;border-radius:9px"><span>live sounds</span></div><div class="pill" style="left:126.6px;top:1.7px;width:70.9px;height:18px;border-radius:9px"><span>experimental</span></div><div class="pill" style="left:203.0px;top:1.7px;width:53.9px;height:18px;border-radius:9px"><span>ambient</span></div><div class="pill" style="left:262.5px;top:1.7px;width:33.5px;height:18px;border-radius:9px"><span>pads</span></div></div>
<div class="a" style="left:666.5px;top:-1.3px"><svg width="112" height="24" viewBox="0 0 112 24"><g fill="#565656"><rect x="1.0" y="10.51" width="1.15" height="2.98"/><rect x="2.6" y="10.72" width="1.15" height="2.57"/><rect x="4.2" y="7.22" width="1.15" height="9.57"/><rect x="5.8" y="5.40" width="1.15" height="13.20"/><rect x="7.4" y="3.68" width="1.15" height="16.64"/><rect x="9.0" y="3.36" width="1.15" height="17.28"/><rect x="10.6" y="2.75" width="1.15" height="18.51"/><rect x="12.2" y="2.64" width="1.15" height="18.73"/><rect x="13.8" y="3.20" width="1.15" height="17.60"/><rect x="15.4" y="5.65" width="1.15" height="12.70"/><rect x="17.0" y="6.45" width="1.15" height="11.11"/><rect x="18.6" y="7.89" width="1.15" height="8.23"/><rect x="20.2" y="8.98" width="1.15" height="6.04"/><rect x="21.8" y="9.25" width="1.15" height="5.51"/><rect x="23.4" y="7.34" width="1.15" height="9.33"/><rect x="25.0" y="6.58" width="1.15" height="10.84"/><rect x="26.6" y="4.64" width="1.15" height="14.71"/><rect x="28.2" y="2.85" width="1.15" height="18.29"/><rect x="29.8" y="1.66" width="1.15" height="20.67"/><rect x="31.4" y="3.11" width="1.15" height="17.79"/><rect x="33.0" y="3.35" width="1.15" height="17.31"/><rect x="34.6" y="5.62" width="1.15" height="12.77"/><rect x="36.2" y="7.51" width="1.15" height="8.98"/><rect x="37.8" y="8.81" width="1.15" height="6.37"/><rect x="39.4" y="9.77" width="1.15" height="4.45"/><rect x="41.0" y="9.10" width="1.15" height="5.80"/><rect x="42.6" y="7.50" width="1.15" height="9.00"/><rect x="44.2" y="4.73" width="1.15" height="14.55"/><rect x="45.8" y="1.98" width="1.15" height="20.03"/><rect x="47.4" y="2.34" width="1.15" height="19.33"/><rect x="49.0" y="2.74" width="1.15" height="18.52"/><rect x="50.6" y="2.53" width="1.15" height="18.95"/><rect x="52.2" y="5.51" width="1.15" height="12.97"/><rect x="53.8" y="7.72" width="1.15" height="8.55"/><rect x="55.4" y="9.29" width="1.15" height="5.41"/><rect x="57.0" y="9.97" width="1.15" height="4.05"/><rect x="58.6" y="9.37" width="1.15" height="5.25"/><rect x="60.2" y="8.60" width="1.15" height="6.79"/><rect x="61.8" y="7.23" width="1.15" height="9.53"/><rect x="63.4" y="5.94" width="1.15" height="12.12"/><rect x="65.0" y="2.71" width="1.15" height="18.59"/><rect x="66.6" y="2.68" width="1.15" height="18.63"/><rect x="68.2" y="0.77" width="1.15" height="22.46"/><rect x="69.8" y="0.00" width="1.15" height="24.00"/><rect x="71.4" y="2.49" width="1.15" height="19.03"/><rect x="73.0" y="3.02" width="1.15" height="17.96"/><rect x="74.6" y="5.87" width="1.15" height="12.27"/><rect x="76.2" y="7.27" width="1.15" height="9.46"/><rect x="77.8" y="8.01" width="1.15" height="7.98"/><rect x="79.4" y="9.15" width="1.15" height="5.70"/><rect x="81.0" y="9.50" width="1.15" height="5.00"/><rect x="82.6" y="10.07" width="1.15" height="3.86"/><rect x="84.2" y="10.19" width="1.15" height="3.62"/><rect x="85.8" y="10.67" width="1.15" height="2.67"/><rect x="87.4" y="10.87" width="1.15" height="2.25"/><rect x="89.0" y="10.98" width="1.15" height="2.05"/><rect x="90.6" y="11.18" width="1.15" height="1.63"/><rect x="92.2" y="11.32" width="1.15" height="1.37"/><rect x="93.8" y="11.46" width="1.15" height="1.08"/><rect x="95.4" y="11.46" width="1.15" height="1.09"/><rect x="97.0" y="11.43" width="1.15" height="1.14"/><rect x="98.6" y="11.46" width="1.15" height="1.09"/><rect x="100.2" y="11.48" width="1.15" height="1.05"/><rect x="101.8" y="11.46" width="1.15" height="1.07"/><rect x="103.4" y="11.49" width="1.15" height="1.02"/><rect x="105.0" y="11.47" width="1.15" height="1.07"/><rect x="106.6" y="11.40" width="1.15" height="1.20"/><rect x="108.2" y="11.40" width="1.15" height="1.19"/><rect x="109.8" y="11.44" width="1.15" height="1.12"/><rect x="0" y="11.55" width="112" height=".9"/></g></svg></div>
<svg class="a" style="left:903px;top:4px" width="13" height="13" viewBox="0 0 13 13"><g stroke="#a8a8a8" stroke-width="1.2" fill="none" stroke-linecap="round"><line x1="6.5" y1="1" x2="6.5" y2="8.6"/><polyline points="3.6,6 6.5,8.9 9.4,6" stroke-linejoin="round"/><line x1="2" y1="11.6" x2="11.2" y2="11.6"/></g></svg>
<svg class="a" style="left:926px;top:4px" width="6" height="14" viewBox="0 0 6 14"><g fill="#b8b8b8"><circle cx="3" cy="2.3" r="1.25"/><circle cx="3" cy="6.5" r="1.25"/><circle cx="3" cy="10.8" r="1.25"/></g></svg>
</div>
<div class="a" style="left:0;top:397.6px;width:1024px;height:24px;">
<div class="a" style="left:85.2px;top:0;width:21.6px;height:21.4px;background:radial-gradient(ellipse 8px 6px at 40% 40%,#e4f4f8,rgba(0,0,0,0)),linear-gradient(135deg,#a0d4e8,#c4e6f0 50%,#88c4dc)"></div>
<svg class="a" style="left:114px;top:4.5px" width="14" height="13" viewBox="0 0 14 13"><g stroke="#a8a8a8" stroke-width="1.1" fill="none"><line x1="4.3" y1="1" x2="4.3" y2="11.2"/><line x1="9.5" y1="1" x2="9.5" y2="11.2"/></g><circle cx="4.3" cy="5.1" r="1.9" fill="#1a1a1a" stroke="#a8a8a8" stroke-width="1.1"/><circle cx="9.5" cy="7.2" r="1.9" fill="#1a1a1a" stroke="#a8a8a8" stroke-width="1.1"/></svg>
<div class="t" style="left:134.7px;top:5.6px;font-size:10px;font-weight:bold;color:#efefef;transform:scaleX(0.97)">4444Radio</div>
<div class="a" style="left:330px;top:0;width:300px;height:22px;-webkit-mask-image:linear-gradient(90deg,#000 266px,rgba(0,0,0,.5) 282px,rgba(0,0,0,0) 297px)"><div class="pill" style="left:6.9px;top:1.7px;width:43.7px;height:18px;border-radius:9px"><span>synth</span></div><div class="pill" style="left:56.3px;top:1.7px;width:71.8px;height:18px;border-radius:9px"><span>experimental</span></div><div class="pill" style="left:133.8px;top:1.7px;width:53.1px;height:18px;border-radius:9px"><span>ambient</span></div><div class="pill" style="left:192.2px;top:1.7px;width:53.1px;height:18px;border-radius:9px"><span>textures</span></div><div class="pill" style="left:251.6px;top:1.7px;width:69.4px;height:18px;border-radius:9px"><span>processed</span></div></div>
<div class="a" style="left:666.5px;top:-1.3px"><svg width="112" height="24" viewBox="0 0 112 24"><g fill="#565656"><rect x="1.0" y="10.82" width="1.15" height="2.37"/><rect x="2.6" y="9.87" width="1.15" height="4.26"/><rect x="4.2" y="9.04" width="1.15" height="5.92"/><rect x="5.8" y="7.95" width="1.15" height="8.10"/><rect x="7.4" y="6.45" width="1.15" height="11.11"/><rect x="9.0" y="9.23" width="1.15" height="5.54"/><rect x="10.6" y="9.30" width="1.15" height="5.40"/><rect x="12.2" y="8.08" width="1.15" height="7.83"/><rect x="13.8" y="6.64" width="1.15" height="10.72"/><rect x="15.4" y="6.37" width="1.15" height="11.25"/><rect x="17.0" y="7.37" width="1.15" height="9.25"/><rect x="18.6" y="7.73" width="1.15" height="8.53"/><rect x="20.2" y="7.74" width="1.15" height="8.52"/><rect x="21.8" y="7.09" width="1.15" height="9.82"/><rect x="23.4" y="7.15" width="1.15" height="9.71"/><rect x="25.0" y="6.57" width="1.15" height="10.86"/><rect x="26.6" y="5.86" width="1.15" height="12.27"/><rect x="28.2" y="5.55" width="1.15" height="12.90"/><rect x="29.8" y="5.66" width="1.15" height="12.68"/><rect x="31.4" y="4.38" width="1.15" height="15.25"/><rect x="33.0" y="4.38" width="1.15" height="15.23"/><rect x="34.6" y="4.10" width="1.15" height="15.80"/><rect x="36.2" y="4.64" width="1.15" height="14.71"/><rect x="37.8" y="3.43" width="1.15" height="17.13"/><rect x="39.4" y="3.62" width="1.15" height="16.75"/><rect x="41.0" y="2.59" width="1.15" height="18.82"/><rect x="42.6" y="2.97" width="1.15" height="18.07"/><rect x="44.2" y="2.33" width="1.15" height="19.34"/><rect x="45.8" y="2.63" width="1.15" height="18.73"/><rect x="47.4" y="2.36" width="1.15" height="19.27"/><rect x="49.0" y="3.17" width="1.15" height="17.65"/><rect x="50.6" y="2.64" width="1.15" height="18.72"/><rect x="52.2" y="2.47" width="1.15" height="19.06"/><rect x="53.8" y="2.31" width="1.15" height="19.38"/><rect x="55.4" y="3.17" width="1.15" height="17.66"/><rect x="57.0" y="2.28" width="1.15" height="19.43"/><rect x="58.6" y="2.23" width="1.15" height="19.53"/><rect x="60.2" y="2.56" width="1.15" height="18.88"/><rect x="61.8" y="2.20" width="1.15" height="19.61"/><rect x="63.4" y="2.57" width="1.15" height="18.87"/><rect x="65.0" y="3.65" width="1.15" height="16.70"/><rect x="66.6" y="3.99" width="1.15" height="16.02"/><rect x="68.2" y="4.91" width="1.15" height="14.17"/><rect x="69.8" y="4.32" width="1.15" height="15.36"/><rect x="71.4" y="4.60" width="1.15" height="14.80"/><rect x="73.0" y="5.61" width="1.15" height="12.77"/><rect x="74.6" y="5.75" width="1.15" height="12.50"/><rect x="76.2" y="6.12" width="1.15" height="11.76"/><rect x="77.8" y="6.50" width="1.15" height="10.99"/><rect x="79.4" y="7.03" width="1.15" height="9.95"/><rect x="81.0" y="7.53" width="1.15" height="8.93"/><rect x="82.6" y="8.58" width="1.15" height="6.84"/><rect x="84.2" y="9.23" width="1.15" height="5.53"/><rect x="85.8" y="9.90" width="1.15" height="4.20"/><rect x="87.4" y="10.26" width="1.15" height="3.48"/><rect x="89.0" y="10.58" width="1.15" height="2.85"/><rect x="90.6" y="10.90" width="1.15" height="2.21"/><rect x="92.2" y="11.11" width="1.15" height="1.78"/><rect x="93.8" y="11.38" width="1.15" height="1.23"/><rect x="95.4" y="11.49" width="1.15" height="1.02"/><rect x="97.0" y="11.46" width="1.15" height="1.08"/><rect x="98.6" y="11.44" width="1.15" height="1.12"/><rect x="100.2" y="11.48" width="1.15" height="1.03"/><rect x="101.8" y="11.43" width="1.15" height="1.13"/><rect x="103.4" y="11.44" width="1.15" height="1.12"/><rect x="105.0" y="11.50" width="1.15" height="0.99"/><rect x="106.6" y="11.46" width="1.15" height="1.09"/><rect x="108.2" y="11.48" width="1.15" height="1.03"/><rect x="109.8" y="11.50" width="1.15" height="1.00"/><rect x="0" y="11.55" width="112" height=".9"/></g></svg></div>
<svg class="a" style="left:903px;top:3.3px" width="13" height="13" viewBox="0 0 13 13"><circle cx="6.7" cy="6.5" r="5.9" fill="#1f5af5"/><polyline points="4,6.8 5.9,8.5 9.4,4.9" fill="none" stroke="#fff" stroke-width="1.4" stroke-linecap="round" stroke-linejoin="round"/></svg>
<svg class="a" style="left:926px;top:4px" width="6" height="14" viewBox="0 0 6 14"><g fill="#b8b8b8"><circle cx="3" cy="2.3" r="1.25"/><circle cx="3" cy="6.5" r="1.25"/><circle cx="3" cy="10.8" r="1.25"/></g></svg>
</div>
<div class="a" style="left:0;top:436.3px;width:1024px;height:24px;">
<div class="a" style="left:85.2px;top:0;width:21.6px;height:21.4px;background:radial-gradient(ellipse 6px 3px at 25% 12%,rgba(170,110,60,.55),rgba(0,0,0,0)),radial-gradient(ellipse 6px 3px at 80% 88%,rgba(170,100,50,.5),rgba(0,0,0,0)),radial-gradient(ellipse 5px 3px at 30% 45%,rgba(20,14,12,.9),rgba(0,0,0,0)),radial-gradient(ellipse 5px 3px at 70% 70%,rgba(20,14,12,.8),rgba(0,0,0,0)),repeating-linear-gradient(176deg,#1e120e 0,#4e3028 2px,#24160f 3.5px,#6a4640 5px,#1e120e 7px),#3a261e"></div>
<svg class="a" style="left:114px;top:4.5px" width="14" height="13" viewBox="0 0 14 13"><g stroke="#a8a8a8" stroke-width="1.1" fill="none"><line x1="4.3" y1="1" x2="4.3" y2="11.2"/><line x1="9.5" y1="1" x2="9.5" y2="11.2"/></g><circle cx="4.3" cy="5.1" r="1.9" fill="#1a1a1a" stroke="#a8a8a8" stroke-width="1.1"/><circle cx="9.5" cy="7.2" r="1.9" fill="#1a1a1a" stroke="#a8a8a8" stroke-width="1.1"/></svg>
<div class="t" style="left:134.7px;top:5.6px;font-size:10px;font-weight:bold;color:#efefef;transform:scaleX(0.95)">80s - Lead</div>
<div class="a" style="left:330px;top:0;width:300px;height:22px;-webkit-mask-image:linear-gradient(90deg,#000 266px,rgba(0,0,0,.5) 282px,rgba(0,0,0,0) 297px)"><div class="pill" style="left:6.9px;top:1.7px;width:73.7px;height:18px;border-radius:9px"><span>electric guitar</span></div><div class="pill" style="left:86.0px;top:1.7px;width:44.6px;height:18px;border-radius:9px"><span>guitar</span></div><div class="pill" style="left:136.0px;top:1.7px;width:39.6px;height:18px;border-radius:9px"><span>rock</span></div><div class="pill" style="left:181.2px;top:1.7px;width:61.9px;height:18px;border-radius:9px"><span>synth-pop</span></div><div class="pill" style="left:248.4px;top:1.7px;width:40.6px;height:18px;border-radius:9px"><span>leads</span></div></div>
<div class="a" style="left:666.5px;top:-1.3px"><svg width="112" height="24" viewBox="0 0 112 24"><g fill="#565656"><rect x="1.0" y="10.31" width="1.15" height="3.38"/><rect x="2.6" y="10.25" width="1.15" height="3.51"/><rect x="4.2" y="7.70" width="1.15" height="8.60"/><rect x="5.8" y="5.90" width="1.15" height="12.19"/><rect x="7.4" y="3.89" width="1.15" height="16.21"/><rect x="9.0" y="1.03" width="1.15" height="21.94"/><rect x="10.6" y="0.45" width="1.15" height="23.09"/><rect x="12.2" y="0.92" width="1.15" height="22.15"/><rect x="13.8" y="3.23" width="1.15" height="17.54"/><rect x="15.4" y="6.11" width="1.15" height="11.78"/><rect x="17.0" y="7.24" width="1.15" height="9.52"/><rect x="18.6" y="8.95" width="1.15" height="6.11"/><rect x="20.2" y="9.00" width="1.15" height="6.00"/><rect x="21.8" y="8.51" width="1.15" height="6.97"/><rect x="23.4" y="7.28" width="1.15" height="9.44"/><rect x="25.0" y="5.93" width="1.15" height="12.14"/><rect x="26.6" y="2.93" width="1.15" height="18.14"/><rect x="28.2" y="2.42" width="1.15" height="19.16"/><rect x="29.8" y="3.08" width="1.15" height="17.85"/><rect x="31.4" y="3.30" width="1.15" height="17.41"/><rect x="33.0" y="5.96" width="1.15" height="12.08"/><rect x="34.6" y="7.15" width="1.15" height="9.70"/><rect x="36.2" y="8.47" width="1.15" height="7.06"/><rect x="37.8" y="7.08" width="1.15" height="9.85"/><rect x="39.4" y="4.47" width="1.15" height="15.06"/><rect x="41.0" y="2.74" width="1.15" height="18.53"/><rect x="42.6" y="3.19" width="1.15" height="17.63"/><rect x="44.2" y="4.10" width="1.15" height="15.80"/><rect x="45.8" y="4.22" width="1.15" height="15.55"/><rect x="47.4" y="2.94" width="1.15" height="18.12"/><rect x="49.0" y="2.70" width="1.15" height="18.60"/><rect x="50.6" y="2.52" width="1.15" height="18.96"/><rect x="52.2" y="4.34" width="1.15" height="15.32"/><rect x="53.8" y="5.86" width="1.15" height="12.27"/><rect x="55.4" y="7.47" width="1.15" height="9.06"/><rect x="57.0" y="7.45" width="1.15" height="9.10"/><rect x="58.6" y="6.09" width="1.15" height="11.81"/><rect x="60.2" y="3.32" width="1.15" height="17.35"/><rect x="61.8" y="3.35" width="1.15" height="17.31"/><rect x="63.4" y="2.81" width="1.15" height="18.38"/><rect x="65.0" y="2.95" width="1.15" height="18.10"/><rect x="66.6" y="4.77" width="1.15" height="14.45"/><rect x="68.2" y="5.42" width="1.15" height="13.17"/><rect x="69.8" y="4.01" width="1.15" height="15.98"/><rect x="71.4" y="3.21" width="1.15" height="17.58"/><rect x="73.0" y="4.09" width="1.15" height="15.81"/><rect x="74.6" y="4.46" width="1.15" height="15.08"/><rect x="76.2" y="6.36" width="1.15" height="11.28"/><rect x="77.8" y="7.06" width="1.15" height="9.88"/><rect x="79.4" y="7.13" width="1.15" height="9.74"/><rect x="81.0" y="8.24" width="1.15" height="7.52"/><rect x="82.6" y="8.37" width="1.15" height="7.27"/><rect x="84.2" y="8.88" width="1.15" height="6.23"/><rect x="85.8" y="9.46" width="1.15" height="5.07"/><rect x="87.4" y="9.95" width="1.15" height="4.10"/><rect x="89.0" y="9.96" width="1.15" height="4.08"/><rect x="90.6" y="10.39" width="1.15" height="3.22"/><rect x="92.2" y="10.63" width="1.15" height="2.74"/><rect x="93.8" y="10.84" width="1.15" height="2.32"/><rect x="95.4" y="10.86" width="1.15" height="2.28"/><rect x="97.0" y="11.10" width="1.15" height="1.80"/><rect x="98.6" y="11.26" width="1.15" height="1.49"/><rect x="100.2" y="11.33" width="1.15" height="1.34"/><rect x="101.8" y="11.46" width="1.15" height="1.08"/><rect x="103.4" y="11.44" width="1.15" height="1.12"/><rect x="105.0" y="11.46" width="1.15" height="1.08"/><rect x="106.6" y="11.48" width="1.15" height="1.05"/><rect x="108.2" y="11.42" width="1.15" height="1.15"/><rect x="109.8" y="11.42" width="1.15" height="1.16"/><rect x="0" y="11.55" width="112" height=".9"/></g></svg></div>
<svg class="a" style="left:903px;top:4px" width="13" height="13" viewBox="0 0 13 13"><g stroke="#a8a8a8" stroke-width="1.2" fill="none" stroke-linecap="round"><line x1="6.5" y1="1" x2="6.5" y2="8.6"/><polyline points="3.6,6 6.5,8.9 9.4,6" stroke-linejoin="round"/><line x1="2" y1="11.6" x2="11.2" y2="11.6"/></g></svg>
<svg class="a" style="left:926px;top:4px" width="6" height="14" viewBox="0 0 6 14"><g fill="#b8b8b8"><circle cx="3" cy="2.3" r="1.25"/><circle cx="3" cy="6.5" r="1.25"/><circle cx="3" cy="10.8" r="1.25"/></g></svg>
</div>
<div class="a" style="left:0;top:475.0px;width:1024px;height:24px;">
<div class="a" style="left:85.2px;top:0;width:21.6px;height:21.4px;background:radial-gradient(ellipse 6px 3px at 25% 12%,rgba(170,110,60,.55),rgba(0,0,0,0)),radial-gradient(ellipse 6px 3px at 80% 88%,rgba(170,100,50,.5),rgba(0,0,0,0)),radial-gradient(ellipse 5px 3px at 30% 45%,rgba(20,14,12,.9),rgba(0,0,0,0)),radial-gradient(ellipse 5px 3px at 70% 70%,rgba(20,14,12,.8),rgba(0,0,0,0)),repeating-linear-gradient(176deg,#1e120e 0,#4e3028 2px,#24160f 3.5px,#6a4640 5px,#1e120e 7px),#3a261e"></div>
<svg class="a" style="left:114px;top:4.5px" width="14" height="13" viewBox="0 0 14 13"><g stroke="#a8a8a8" stroke-width="1.1" fill="none"><line x1="4.3" y1="1" x2="4.3" y2="11.2"/><line x1="9.5" y1="1" x2="9.5" y2="11.2"/></g><circle cx="4.3" cy="5.1" r="1.9" fill="#1a1a1a" stroke="#a8a8a8" stroke-width="1.1"/><circle cx="9.5" cy="7.2" r="1.9" fill="#1a1a1a" stroke="#a8a8a8" stroke-width="1.1"/></svg>
<div class="t" style="left:134.7px;top:5.6px;font-size:10px;font-weight:bold;color:#efefef;transform:scaleX(0.95)">80s - Pad</div>
<div class="a" style="left:330px;top:0;width:300px;height:22px;-webkit-mask-image:linear-gradient(90deg,#000 266px,rgba(0,0,0,.5) 282px,rgba(0,0,0,0) 297px)"><div class="pill" style="left:6.9px;top:1.7px;width:73.7px;height:18px;border-radius:9px"><span>electric guitar</span></div><div class="pill" style="left:86.0px;top:1.7px;width:44.6px;height:18px;border-radius:9px"><span>guitar</span></div><div class="pill" style="left:136.0px;top:1.7px;width:39.6px;height:18px;border-radius:9px"><span>rock</span></div><div class="pill" style="left:181.2px;top:1.7px;width:61.9px;height:18px;border-radius:9px"><span>synth-pop</span></div><div class="pill" style="left:248.4px;top:1.7px;width:40.6px;height:18px;border-radius:9px"><span>pads</span></div></div>
<div class="a" style="left:666.5px;top:-1.3px"><svg width="112" height="24" viewBox="0 0 112 24"><g fill="#565656"><rect x="1.0" y="10.36" width="1.15" height="3.29"/><rect x="2.6" y="10.17" width="1.15" height="3.66"/><rect x="4.2" y="8.41" width="1.15" height="7.18"/><rect x="5.8" y="6.50" width="1.15" height="11.00"/><rect x="7.4" y="4.56" width="1.15" height="14.88"/><rect x="9.0" y="3.23" width="1.15" height="17.54"/><rect x="10.6" y="1.78" width="1.15" height="20.44"/><rect x="12.2" y="2.02" width="1.15" height="19.96"/><rect x="13.8" y="1.87" width="1.15" height="20.26"/><rect x="15.4" y="5.24" width="1.15" height="13.52"/><rect x="17.0" y="6.83" width="1.15" height="10.35"/><rect x="18.6" y="5.86" width="1.15" height="12.28"/><rect x="20.2" y="4.26" width="1.15" height="15.48"/><rect x="21.8" y="3.65" width="1.15" height="16.70"/><rect x="23.4" y="3.85" width="1.15" height="16.31"/><rect x="25.0" y="5.95" width="1.15" height="12.09"/><rect x="26.6" y="6.67" width="1.15" height="10.67"/><rect x="28.2" y="8.25" width="1.15" height="7.50"/><rect x="29.8" y="8.77" width="1.15" height="6.46"/><rect x="31.4" y="8.34" width="1.15" height="7.31"/><rect x="33.0" y="7.36" width="1.15" height="9.27"/><rect x="34.6" y="5.59" width="1.15" height="12.82"/><rect x="36.2" y="3.84" width="1.15" height="16.31"/><rect x="37.8" y="2.38" width="1.15" height="19.24"/><rect x="39.4" y="0.64" width="1.15" height="22.73"/><rect x="41.0" y="1.11" width="1.15" height="21.78"/><rect x="42.6" y="3.35" width="1.15" height="17.29"/><rect x="44.2" y="4.63" width="1.15" height="14.74"/><rect x="45.8" y="3.31" width="1.15" height="17.39"/><rect x="47.4" y="0.15" width="1.15" height="23.69"/><rect x="49.0" y="-0.74" width="1.15" height="25.48"/><rect x="50.6" y="0.96" width="1.15" height="22.09"/><rect x="52.2" y="4.07" width="1.15" height="15.86"/><rect x="53.8" y="5.30" width="1.15" height="13.40"/><rect x="55.4" y="7.57" width="1.15" height="8.87"/><rect x="57.0" y="8.52" width="1.15" height="6.97"/><rect x="58.6" y="8.92" width="1.15" height="6.16"/><rect x="60.2" y="8.76" width="1.15" height="6.47"/><rect x="61.8" y="8.41" width="1.15" height="7.18"/><rect x="63.4" y="7.31" width="1.15" height="9.39"/><rect x="65.0" y="6.71" width="1.15" height="10.57"/><rect x="66.6" y="5.40" width="1.15" height="13.20"/><rect x="68.2" y="3.28" width="1.15" height="17.44"/><rect x="69.8" y="3.23" width="1.15" height="17.53"/><rect x="71.4" y="2.44" width="1.15" height="19.11"/><rect x="73.0" y="1.49" width="1.15" height="21.01"/><rect x="74.6" y="3.71" width="1.15" height="16.59"/><rect x="76.2" y="4.85" width="1.15" height="14.30"/><rect x="77.8" y="5.98" width="1.15" height="12.04"/><rect x="79.4" y="7.05" width="1.15" height="9.89"/><rect x="81.0" y="7.85" width="1.15" height="8.30"/><rect x="82.6" y="8.04" width="1.15" height="7.91"/><rect x="84.2" y="8.50" width="1.15" height="7.01"/><rect x="85.8" y="9.40" width="1.15" height="5.21"/><rect x="87.4" y="9.59" width="1.15" height="4.82"/><rect x="89.0" y="9.89" width="1.15" height="4.23"/><rect x="90.6" y="10.19" width="1.15" height="3.62"/><rect x="92.2" y="10.49" width="1.15" height="3.03"/><rect x="93.8" y="10.74" width="1.15" height="2.52"/><rect x="95.4" y="10.81" width="1.15" height="2.38"/><rect x="97.0" y="10.93" width="1.15" height="2.15"/><rect x="98.6" y="11.20" width="1.15" height="1.60"/><rect x="100.2" y="11.28" width="1.15" height="1.43"/><rect x="101.8" y="11.30" width="1.15" height="1.39"/><rect x="103.4" y="11.40" width="1.15" height="1.20"/><rect x="105.0" y="11.44" width="1.15" height="1.13"/><rect x="106.6" y="11.51" width="1.15" height="0.99"/><rect x="108.2" y="11.43" width="1.15" height="1.14"/><rect x="109.8" y="11.40" width="1.15" height="1.20"/><rect x="0" y="11.55" width="112" height=".9"/></g></svg></div>
<svg class="a" style="left:903px;top:4px" width="13" height="13" viewBox="0 0 13 13"><g stroke="#a8a8a8" stroke-width="1.2" fill="none" stroke-linecap="round"><line x1="6.5" y1="1" x2="6.5" y2="8.6"/><polyline points="3.6,6 6.5,8.9 9.4,6" stroke-linejoin="round"/><line x1="2" y1="11.6" x2="11.2" y2="11.6"/></g></svg>
<svg class="a" style="left:926px;top:4px" width="6" height="14" viewBox="0 0 6 14"><g fill="#b8b8b8"><circle cx="3" cy="2.3" r="1.25"/><circle cx="3" cy="6.5" r="1.25"/><circle cx="3" cy="10.8" r="1.25"/></g></svg>
</div>
<div class="a" style="left:0;top:513.7px;width:1024px;height:24px;opacity:.42;">
<div class="a" style="left:85.2px;top:0;width:21.6px;height:21.4px;background:radial-gradient(ellipse 6px 3px at 25% 12%,rgba(170,110,60,.55),rgba(0,0,0,0)),radial-gradient(ellipse 6px 3px at 80% 88%,rgba(170,100,50,.5),rgba(0,0,0,0)),radial-gradient(ellipse 5px 3px at 30% 45%,rgba(20,14,12,.9),rgba(0,0,0,0)),radial-gradient(ellipse 5px 3px at 70% 70%,rgba(20,14,12,.8),rgba(0,0,0,0)),repeating-linear-gradient(176deg,#1e120e 0,#4e3028 2px,#24160f 3.5px,#6a4640 5px,#1e120e 7px),#3a261e"></div>
<svg class="a" style="left:114px;top:4.5px" width="14" height="13" viewBox="0 0 14 13"><g stroke="#a8a8a8" stroke-width="1.1" fill="none"><line x1="4.3" y1="1" x2="4.3" y2="11.2"/><line x1="9.5" y1="1" x2="9.5" y2="11.2"/></g><circle cx="4.3" cy="5.1" r="1.9" fill="#1a1a1a" stroke="#a8a8a8" stroke-width="1.1"/><circle cx="9.5" cy="7.2" r="1.9" fill="#1a1a1a" stroke="#a8a8a8" stroke-width="1.1"/></svg>
<div class="t" style="left:134.7px;top:5.6px;font-size:10px;font-weight:bold;color:#efefef;transform:scaleX(0.94)">80s - Plucks</div>
<div class="a" style="left:330px;top:0;width:300px;height:22px;-webkit-mask-image:linear-gradient(90deg,#000 266px,rgba(0,0,0,.5) 282px,rgba(0,0,0,0) 297px)"><div class="pill" style="left:6.9px;top:1.7px;width:73.7px;height:18px;border-radius:9px"><span>electric guitar</span></div><div class="pill" style="left:86.0px;top:1.7px;width:44.6px;height:18px;border-radius:9px"><span>guitar</span></div><div class="pill" style="left:136.0px;top:1.7px;width:39.6px;height:18px;border-radius:9px"><span>rock</span></div><div class="pill" style="left:181.2px;top:1.7px;width:61.9px;height:18px;border-radius:9px"><span>synth-pop</span></div><div class="pill" style="left:248.4px;top:1.7px;width:43.6px;height:18px;border-radius:9px"><span>plucks</span></div></div>
<div class="a" style="left:666.5px;top:-1.3px"><svg width="112" height="24" viewBox="0 0 112 24"><g fill="#565656"><rect x="1.0" y="10.00" width="1.15" height="4.00"/><rect x="2.6" y="10.11" width="1.15" height="3.78"/><rect x="4.2" y="8.58" width="1.15" height="6.85"/><rect x="5.8" y="6.59" width="1.15" height="10.82"/><rect x="7.4" y="5.34" width="1.15" height="13.31"/><rect x="9.0" y="2.50" width="1.15" height="19.00"/><rect x="10.6" y="0.33" width="1.15" height="23.34"/><rect x="12.2" y="0.84" width="1.15" height="22.33"/><rect x="13.8" y="3.43" width="1.15" height="17.13"/><rect x="15.4" y="5.24" width="1.15" height="13.52"/><rect x="17.0" y="6.51" width="1.15" height="10.97"/><rect x="18.6" y="6.26" width="1.15" height="11.48"/><rect x="20.2" y="4.31" width="1.15" height="15.38"/><rect x="21.8" y="3.96" width="1.15" height="16.08"/><rect x="23.4" y="4.74" width="1.15" height="14.51"/><rect x="25.0" y="5.30" width="1.15" height="13.40"/><rect x="26.6" y="7.39" width="1.15" height="9.23"/><rect x="28.2" y="8.40" width="1.15" height="7.20"/><rect x="29.8" y="8.87" width="1.15" height="6.26"/><rect x="31.4" y="8.54" width="1.15" height="6.92"/><rect x="33.0" y="7.59" width="1.15" height="8.81"/><rect x="34.6" y="5.53" width="1.15" height="12.94"/><rect x="36.2" y="3.39" width="1.15" height="17.22"/><rect x="37.8" y="1.37" width="1.15" height="21.26"/><rect x="39.4" y="1.95" width="1.15" height="20.11"/><rect x="41.0" y="1.45" width="1.15" height="21.10"/><rect x="42.6" y="2.83" width="1.15" height="18.34"/><rect x="44.2" y="4.10" width="1.15" height="15.80"/><rect x="45.8" y="3.25" width="1.15" height="17.51"/><rect x="47.4" y="0.11" width="1.15" height="23.79"/><rect x="49.0" y="0.46" width="1.15" height="23.07"/><rect x="50.6" y="2.02" width="1.15" height="19.97"/><rect x="52.2" y="2.89" width="1.15" height="18.23"/><rect x="53.8" y="6.09" width="1.15" height="11.82"/><rect x="55.4" y="7.39" width="1.15" height="9.23"/><rect x="57.0" y="8.56" width="1.15" height="6.87"/><rect x="58.6" y="8.80" width="1.15" height="6.40"/><rect x="60.2" y="8.81" width="1.15" height="6.38"/><rect x="61.8" y="8.31" width="1.15" height="7.37"/><rect x="63.4" y="7.86" width="1.15" height="8.27"/><rect x="65.0" y="6.54" width="1.15" height="10.93"/><rect x="66.6" y="5.58" width="1.15" height="12.83"/><rect x="68.2" y="3.44" width="1.15" height="17.11"/><rect x="69.8" y="2.64" width="1.15" height="18.71"/><rect x="71.4" y="2.76" width="1.15" height="18.47"/><rect x="73.0" y="2.66" width="1.15" height="18.69"/><rect x="74.6" y="3.16" width="1.15" height="17.68"/><rect x="76.2" y="4.98" width="1.15" height="14.04"/><rect x="77.8" y="6.57" width="1.15" height="10.86"/><rect x="79.4" y="6.78" width="1.15" height="10.45"/><rect x="81.0" y="7.53" width="1.15" height="8.93"/><rect x="82.6" y="8.56" width="1.15" height="6.88"/><rect x="84.2" y="8.65" width="1.15" height="6.70"/><rect x="85.8" y="9.42" width="1.15" height="5.15"/><rect x="87.4" y="9.76" width="1.15" height="4.49"/><rect x="89.0" y="9.87" width="1.15" height="4.27"/><rect x="90.6" y="10.28" width="1.15" height="3.43"/><rect x="92.2" y="10.32" width="1.15" height="3.36"/><rect x="93.8" y="10.65" width="1.15" height="2.70"/><rect x="95.4" y="10.87" width="1.15" height="2.26"/><rect x="97.0" y="10.93" width="1.15" height="2.14"/><rect x="98.6" y="11.21" width="1.15" height="1.59"/><rect x="100.2" y="11.21" width="1.15" height="1.58"/><rect x="101.8" y="11.40" width="1.15" height="1.19"/><rect x="103.4" y="11.47" width="1.15" height="1.05"/><rect x="105.0" y="11.41" width="1.15" height="1.19"/><rect x="106.6" y="11.43" width="1.15" height="1.13"/><rect x="108.2" y="11.48" width="1.15" height="1.03"/><rect x="109.8" y="11.50" width="1.15" height="1.01"/><rect x="0" y="11.55" width="112" height=".9"/></g></svg></div>
<svg class="a" style="left:903px;top:4px" width="13" height="13" viewBox="0 0 13 13"><g stroke="#a8a8a8" stroke-width="1.2" fill="none" stroke-linecap="round"><line x1="6.5" y1="1" x2="6.5" y2="8.6"/><polyline points="3.6,6 6.5,8.9 9.4,6" stroke-linejoin="round"/><line x1="2" y1="11.6" x2="11.2" y2="11.6"/></g></svg>
<svg class="a" style="left:926px;top:4px" width="6" height="14" viewBox="0 0 6 14"><g fill="#b8b8b8"><circle cx="3" cy="2.3" r="1.25"/><circle cx="3" cy="6.5" r="1.25"/><circle cx="3" cy="10.8" r="1.25"/></g></svg>
</div>
<!-- player -->
<div class="a" style="left:55px;top:534px;width:913px;height:77px;background:#1a1a1a;border-top:1px solid #2a2a2a"></div>
<div class="a" style="left:80.14px;top:553.14px;width:105px;height:105px;transform:scale(.3511);transform-origin:0 0"><div class="art" style="background:#d8d8d8"><svg class="a" style="left:0;top:0" width="94" height="77" viewBox="0 0 94 77">
<defs><linearGradient id="fogm" x1="0" y1="0" x2="0" y2="1"><stop offset="0" stop-color="#fff" stop-opacity=".3"/><stop offset=".5" stop-color="#fff" stop-opacity=".75"/><stop offset="1" stop-color="#fff" stop-opacity="1"/></linearGradient>
<linearGradient id="trg" gradientUnits="userSpaceOnUse" x1="0" y1="0" x2="0" y2="77"><stop offset="0" stop-color="#505050" stop-opacity=".15"/><stop offset=".45" stop-color="#505050" stop-opacity=".6"/><stop offset="1" stop-color="#484848" stop-opacity="1"/></linearGradient>
<linearGradient id="fogbg" x1="0" y1="0" x2="0" y2="1"><stop offset="0" stop-color="#e4e4e4"/><stop offset=".55" stop-color="#dedede"/><stop offset="1" stop-color="#cfcfcf"/></linearGradient>
<filter id="fb"><feGaussianBlur stdDeviation=".5"/></filter></defs>
<rect width="94" height="77" fill="url(#fogbg)"/>
<g filter="url(#fb)"><path d="M5.8 0 L6.6 0 L6.4 77 L4.8 77 Z" fill="url(#trg)" opacity="0.25"/><path d="M13.8 0 L14.5 0 L14.2 77 L12.8 77 Z" fill="url(#trg)" opacity="0.2"/><path d="M21.8 0 L22.9 0 L22.7 77 L20.8 77 Z" fill="url(#trg)" opacity="0.35"/><path d="M31.8 0 L33.3 0 L33.4 77 L30.8 77 Z" fill="url(#trg)" opacity="0.6"/><path d="M39.8 0 L40.8 0 L40.6 77 L38.8 77 Z" fill="url(#trg)" opacity="0.35"/><path d="M47.8 0 L48.5 0 L48.2 77 L46.8 77 Z" fill="url(#trg)" opacity="0.2"/><path d="M55.8 0 L56.8 0 L56.7 77 L54.8 77 Z" fill="url(#trg)" opacity="0.35"/><path d="M64.8 0 L66.2 0 L66.2 77 L63.8 77 Z" fill="url(#trg)" opacity="0.6"/><path d="M72.8 0 L73.5 0 L73.2 77 L71.8 77 Z" fill="url(#trg)" opacity="0.25"/><path d="M80.8 0 L81.8 0 L81.7 77 L79.8 77 Z" fill="url(#trg)" opacity="0.45"/><path d="M86.8 0 L87.5 0 L87.2 77 L85.8 77 Z" fill="url(#trg)" opacity="0.25"/><path d="M91.8 0 L93.1 0 L93.0 77 L90.8 77 Z" fill="url(#trg)" opacity="0.5"/></g>
<path d="M44 77 L44.3 71 Q46.5 68 48.7 71 L49 77 Z" fill="#1e1e1e"/><circle cx="46.6" cy="68.6" r="1.6" fill="#1e1e1e"/>
</svg>
<div class="a" style="left:0;top:77px;width:77px;height:17px;background:#5a9246"></div>
<div class="a lbl" style="left:4.7px;top:83px;color:#1a341b;font-size:5.8px;letter-spacing:.75px">AMBIENT GUITARS</div>
<div class="a" style="left:77px;top:77px;width:17px;height:17px;background:#0a0a0a"></div>
<div class="a" style="left:80.5px;top:80.5px;width:10px;height:10px;border-radius:50%;border:1.3px dotted #ddd"></div>
</div></div>
<div class="a wide sx" style="left:128px;top:562.5px;font-size:11.3px;transform:scaleX(1.15);color:#f2f2f2">Ambient Guitars</div>
<div class="a sx" style="left:128px;top:577.3px;font-size:8.6px;transform:scaleX(1.1);color:#bdbdbd;white-space:nowrap">Rust Bow</div>
<div class="a" style="left:272px;top:557px;width:1px;height:34px;background:#333"></div>
<svg class="a" style="left:293px;top:555px" width="16" height="38" viewBox="0 0 16 38"><g fill="none" stroke="#e0e0e0" stroke-width="1.3" stroke-linecap="round" stroke-linejoin="round"><polyline points="3.3,7.8 8,3 12.7,7.8"/><polyline points="3.3,30.6 8,35.4 12.7,30.6"/></g><ellipse cx="7.6" cy="19.1" rx="3.2" ry="2.6" fill="none" stroke="#999" stroke-width="1.2"/></svg>
<div class="a" style="left:329px;top:558px;width:10px;height:33px;border-radius:5px;background:linear-gradient(180deg,rgba(34,34,34,0),#202020 30%,#202020 70%,rgba(34,34,34,0))"></div>
<div class="a" style="left:329.5px;top:572px;width:9px;height:2px;background:#eee"></div>
<div class="a" style="left:352px;top:558px;width:9px;height:33px;border-radius:5px;background:linear-gradient(180deg,rgba(34,34,34,0),#202020 30%,#202020 70%,rgba(34,34,34,0))"></div>
<div class="a" style="left:352px;top:573px;width:9px;height:17px;border-radius:0 0 4px 4px;background:linear-gradient(180deg,#3a3a3a,#333 60%,#1e1e1e)"></div>
<div class="a" style="left:352px;top:582.5px;width:9px;height:2px;background:#eee"></div>
<div class="key" style="left:383.90px;background:#2f2f2f"></div>
<div class="key" style="left:396.36px;background:#2f2f2f"></div>
<div class="key" style="left:408.82px;background:#2f2f2f"></div>
<div class="key" style="left:421.28px;background:#2f2f2f"></div>
<div class="key" style="left:433.74px;background:#2f2f2f"></div>
<div class="key" style="left:446.20px;background:#2f2f2f"></div>
<div class="key" style="left:458.66px;background:#2f2f2f"></div>
<div class="key" style="left:471.12px;background:#f6f6f6"><i style="background:#4e4e4e"></i></div>
<div class="key" style="left:483.58px;background:#f6f6f6"><i style="background:#4e4e4e"></i></div>
<div class="key" style="left:496.04px;background:#f6f6f6"><i style="background:#4e4e4e"></i></div>
<div class="key" style="left:508.50px;background:#f6f6f6"><i style="background:#4e4e4e"></i></div>
<div class="key" style="left:520.96px;background:#f6f6f6"><i style="background:#4e4e4e"></i></div>
<div class="key" style="left:533.42px;background:#f6f6f6"><i style="background:#4e4e4e"></i></div>
<div class="key" style="left:545.88px;background:#f6f6f6"><i style="background:#4e4e4e"></i></div>
<div class="key" style="left:558.34px;background:#f6f6f6"><i style="background:#4e4e4e"></i></div>
<div class="key" style="left:570.80px;background:#f6f6f6"><i style="background:#4e4e4e"></i></div>
<div class="key" style="left:583.26px;background:#f6f6f6"><i style="background:#4e4e4e"></i></div>
<div class="key" style="left:595.72px;background:#f6f6f6"><i style="background:#4e4e4e"></i></div>
<div class="key" style="left:608.18px;background:#f6f6f6"><i style="background:#4e4e4e"></i></div>
<div class="key" style="left:620.64px;background:#f6f6f6"><i style="background:#4e4e4e"></i></div>
<div class="key" style="left:633.10px;background:#f6f6f6"><i style="background:#4e4e4e"></i></div>
<div class="key" style="left:645.56px;background:#f6f6f6"><i style="background:#4e4e4e"></i></div>
<div class="key" style="left:658.02px;background:#1f5af5"><i style="background:#cfd8ff"></i></div>
<div class="key" style="left:670.48px;background:#f6f6f6"><i style="background:#4e4e4e"></i></div>
<div class="key" style="left:682.94px;background:#f6f6f6"><i style="background:#4e4e4e"></i></div>
<div class="key" style="left:695.40px;background:#f6f6f6"><i style="background:#4e4e4e"></i></div>
<div class="key" style="left:707.86px;background:#f6f6f6"><i style="background:#4e4e4e"></i></div>
<div class="key" style="left:720.32px;background:#f6f6f6"><i style="background:#4e4e4e"></i></div>
<div class="key" style="left:732.78px;background:#f6f6f6"><i style="background:#4e4e4e"></i></div>
<div class="key" style="left:745.24px;background:#f6f6f6"><i style="background:#4e4e4e"></i></div>
<div class="key" style="left:757.70px;background:#f6f6f6"><i style="background:#4e4e4e"></i></div>
<div class="key" style="left:770.16px;background:#f6f6f6"><i style="background:#4e4e4e"></i></div>
<div class="key" style="left:782.62px;background:#f6f6f6"><i style="background:#4e4e4e"></i></div>
<div class="key" style="left:795.08px;background:#f6f6f6"><i style="background:#4e4e4e"></i></div>
<div class="key" style="left:807.54px;background:#f6f6f6"><i style="background:#4e4e4e"></i></div>
<div class="key" style="left:820.00px;background:#f6f6f6"><i style="background:#4e4e4e"></i></div>
<div class="key" style="left:832.46px;background:#f6f6f6"><i style="background:#4e4e4e"></i></div>
<div class="key" style="left:844.92px;background:#f6f6f6"><i style="background:#4e4e4e"></i></div>
<div class="bkey" style="left:390.36px;background:#252525"></div>
<div class="bkey" style="left:402.82px;background:#252525"></div>
<div class="bkey" style="left:427.74px;background:#252525"></div>
<div class="bkey" style="left:440.20px;background:#252525"></div>
<div class="bkey" style="left:452.66px;background:#252525"></div>
<div class="bkey" style="left:477.58px;background:#3c3c3c"></div>
<div class="bkey" style="left:490.04px;background:#3c3c3c"></div>
<div class="bkey" style="left:514.96px;background:#3c3c3c"></div>
<div class="bkey" style="left:527.42px;background:#3c3c3c"></div>
<div class="bkey" style="left:539.88px;background:#3c3c3c"></div>
<div class="bkey" style="left:564.80px;background:#3c3c3c"></div>
<div class="bkey" style="left:577.26px;background:#3c3c3c"></div>
<div class="bkey" style="left:602.18px;background:#3c3c3c"></div>
<div class="bkey" style="left:614.64px;background:#3c3c3c"></div>
<div class="bkey" style="left:627.10px;background:#3c3c3c"></div>
<div class="bkey" style="left:652.02px;background:#3c3c3c"></div>
<div class="bkey" style="left:664.48px;background:#3c3c3c"></div>
<div class="bkey" style="left:689.40px;background:#3c3c3c"></div>
<div class="bkey" style="left:701.86px;background:#3c3c3c"></div>
<div class="bkey" style="left:714.32px;background:#3c3c3c"></div>
<div class="bkey" style="left:739.24px;background:#3c3c3c"></div>
<div class="bkey" style="left:751.70px;background:#3c3c3c"></div>
<div class="bkey" style="left:776.62px;background:#3c3c3c"></div>
<div class="bkey" style="left:789.08px;background:#3c3c3c"></div>
<div class="bkey" style="left:801.54px;background:#3c3c3c"></div>
<div class="bkey" style="left:826.46px;background:#3c3c3c"></div>
<div class="bkey" style="left:838.92px;background:#3c3c3c"></div>
<div class="a sx" style="left:383.9px;top:595px;font-size:7.3px;font-weight:bold;transform:scaleX(1.15);color:#6e6e6e">C1</div>
<div class="a sx" style="left:471.1px;top:595px;font-size:7.3px;font-weight:bold;transform:scaleX(1.15);color:#6e6e6e">C2</div>
<div class="a sx" style="left:558.3px;top:595px;font-size:7.3px;font-weight:bold;transform:scaleX(1.15);color:#6e6e6e">C3</div>
<div class="a sx" style="left:645.6px;top:595px;font-size:7.3px;font-weight:bold;transform:scaleX(1.15);color:#6e6e6e">C4</div>
<div class="a sx" style="left:732.8px;top:595px;font-size:7.3px;font-weight:bold;transform:scaleX(1.15);color:#6e6e6e">C5</div>
<div class="a sx" style="left:820.0px;top:595px;font-size:7.3px;font-weight:bold;transform:scaleX(1.15);color:#6e6e6e">C6</div>
<div class="a" style="left:880px;top:557px;width:1px;height:34px;background:#333"></div>
<div class="a sx" style="left:910.5px;top:561px;font-size:7.6px;transform:scaleX(1.27);color:#9a9a9a;white-space:nowrap;font-weight:bold">0 st</div>
<div class="a wide sx" style="left:906.5px;top:577px;font-size:8.3px;transform:scaleX(1.15);color:#f0f0f0">TUNE</div>
<div class="a" style="left:965px;top:604px;width:8px;height:8px;border-right:2px solid #ddd;border-bottom:2px solid #ddd"></div>
</body></html>
